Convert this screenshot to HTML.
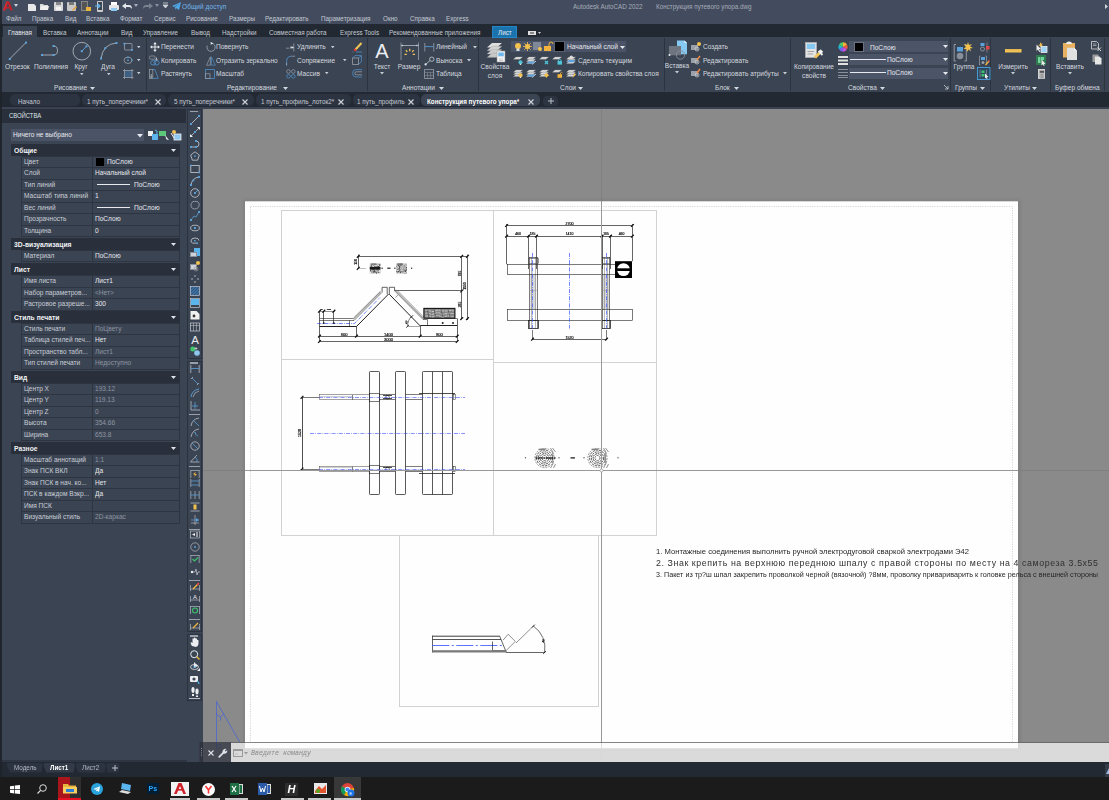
<!DOCTYPE html>
<html><head><meta charset="utf-8">
<style>
*{margin:0;padding:0;box-sizing:border-box}
html,body{width:1109px;height:800px;overflow:hidden;background:#3b4453;font-family:"Liberation Sans",sans-serif;color:#dfe3ea}
.a{position:absolute;white-space:nowrap}
svg.a{overflow:visible}
</style></head>
<body>

<div class="a" style="left:0px;top:0px;width:1109px;height:24px;background:#434c5e;"></div>
<div class="a" style="left:0px;top:24px;width:1109px;height:13px;background:#222933;"></div>
<div class="a" style="left:0px;top:37px;width:1109px;height:55px;background:#3b4453;"></div>
<div class="a" style="left:0px;top:92px;width:1109px;height:15px;background:#222933;"></div>
<div class="a" style="left:0px;top:107px;width:1109px;height:2px;background:#3a4252;"></div>
<svg class="a" style="left:3px;top:1px;" width="10" height="10" viewBox="0 0 10 10"><path d="M0 9.5 L3.6 0.5 H6.2 L9.8 9.5 H7.6 L4.9 2.6 L2.2 9.5Z" fill="#c41f26"/><path d="M3 6 H7 V7.6 H2.4Z" fill="#c41f26"/><path d="M3.6 0.5 H4.6 L1.2 9.5 H0Z" fill="#e03038"/></svg>
<svg class="a" style="left:14px;top:4px;" width="5" height="4" viewBox="0 0 5 4"><path d="M0 0 L4 0 L2 3Z" fill="#cfd4dc"/></svg>
<svg class="a" style="left:28px;top:2.5px;" width="9" height="9" viewBox="0 0 9 9"><path d="M0 1 H6 L8 3 V8 H0Z" fill="#e8e8e8"/></svg>
<svg class="a" style="left:40px;top:2px;" width="10" height="9" viewBox="0 0 10 9"><path d="M0 2 H3 L4 3 H8 V8 H0Z" fill="#d8d8d8"/><path d="M1 4 H9 L8 8 H0Z" fill="#f0f0f0"/></svg>
<svg class="a" style="left:54px;top:2px;" width="9" height="9" viewBox="0 0 9 9"><rect x="0" y="0" width="9" height="9" rx="1" fill="#d8d8d8"/><rect x="2" y="0" width="5" height="3" fill="#888"/><rect x="2" y="5" width="5" height="3" fill="#f4f4f4"/></svg>
<svg class="a" style="left:67px;top:2px;" width="10" height="9" viewBox="0 0 10 9"><rect x="0" y="0" width="9" height="9" rx="1" fill="#c8c8c8"/><rect x="2" y="0" width="5" height="3" fill="#777"/><path d="M5 8 L9 4 L10 5 L6 9Z" fill="#e8a23c"/></svg>
<svg class="a" style="left:81px;top:1px;" width="10" height="10" viewBox="0 0 10 10"><rect x="0" y="0" width="7" height="10" fill="#888"/><rect x="1" y="1" width="5" height="8" fill="#555"/><path d="M5 6 H10 V10 H5Z" fill="#e8b43c"/></svg>
<svg class="a" style="left:95px;top:1px;" width="9" height="11" viewBox="0 0 9 11"><rect x="2" y="0" width="6" height="11" rx="1" fill="#ccc"/><rect x="3" y="1" width="4" height="8" fill="#3b4453"/><path d="M0 5 H5 M3 3 L5 5 L3 7" stroke="#5bb4ec" stroke-width="1.2" fill="none"/></svg>
<svg class="a" style="left:109px;top:2px;" width="10" height="9" viewBox="0 0 10 9"><rect x="0" y="3" width="10" height="5" rx="1" fill="#e6e6e6"/><rect x="2" y="0" width="6" height="3" fill="#fff"/><rect x="2" y="6" width="6" height="3" fill="#8ec8ee"/></svg>
<svg class="a" style="left:122px;top:3px;" width="10" height="7" viewBox="0 0 10 7"><path d="M0 3 L4 0 V2 H7 Q10 2 10 6 Q9 4 7 4 H4 V6Z" fill="#e3e6ea"/></svg>
<svg class="a" style="left:134px;top:4px;" width="4" height="3" viewBox="0 0 4 3"><path d="M0 0 H4 L2 3Z" fill="#aab"/></svg>
<svg class="a" style="left:143px;top:3px;" width="10" height="7" viewBox="0 0 10 7"><path d="M10 3 L6 0 V2 H3 Q0 2 0 6 Q1 4 3 4 H6 V6Z" fill="#7a8190"/></svg>
<svg class="a" style="left:155px;top:4px;" width="4" height="3" viewBox="0 0 4 3"><path d="M0 0 H4 L2 3Z" fill="#8a90a0"/></svg>
<svg class="a" style="left:163px;top:3px;" width="5" height="6" viewBox="0 0 5 6"><path d="M0 0 H5 M0 2 L5 2 L2.5 5Z" stroke="#cfd4dc" stroke-width=".8" fill="#cfd4dc"/></svg>
<svg class="a" style="left:172px;top:2px;" width="9" height="8" viewBox="0 0 9 8"><path d="M0 4 L9 0 L7 8 L4 6 L3 8 L3 5 L8 1 L2 5Z" fill="#4ea8e8"/></svg>
<div class="a" style="left:182px;top:0.50px;height:12px;line-height:12px;font-size:7.2px;color:#6fb5ec;transform-origin:0 50%;transform:scaleX(0.92);">Общий доступ</div>
<div class="a" style="left:573.3px;top:0.50px;height:12px;line-height:12px;font-size:7.2px;color:#a4abb8;transform-origin:0 50%;transform:scaleX(0.875);">Autodesk AutoCAD 2022</div>
<div class="a" style="left:655.7px;top:0.50px;height:12px;line-height:12px;font-size:7.2px;color:#a4abb8;transform-origin:0 50%;transform:scaleX(0.875);">Конструкция путевого упора.dwg</div>
<svg class="a" style="left:1105px;top:4px;" width="3" height="5" viewBox="0 0 3 5"><path d="M0 0 L3 2.5 L0 5Z" fill="#cfd4dc"/></svg>
<div class="a" style="left:6px;top:13.00px;height:12px;line-height:12px;font-size:7.2px;color:#c4c9d2;transform-origin:0 50%;transform:scaleX(0.875);">Файл</div>
<div class="a" style="left:32px;top:13.00px;height:12px;line-height:12px;font-size:7.2px;color:#c4c9d2;transform-origin:0 50%;transform:scaleX(0.875);">Правка</div>
<div class="a" style="left:65px;top:13.00px;height:12px;line-height:12px;font-size:7.2px;color:#c4c9d2;transform-origin:0 50%;transform:scaleX(0.875);">Вид</div>
<div class="a" style="left:86px;top:13.00px;height:12px;line-height:12px;font-size:7.2px;color:#c4c9d2;transform-origin:0 50%;transform:scaleX(0.875);">Вставка</div>
<div class="a" style="left:120px;top:13.00px;height:12px;line-height:12px;font-size:7.2px;color:#c4c9d2;transform-origin:0 50%;transform:scaleX(0.875);">Формат</div>
<div class="a" style="left:154px;top:13.00px;height:12px;line-height:12px;font-size:7.2px;color:#c4c9d2;transform-origin:0 50%;transform:scaleX(0.875);">Сервис</div>
<div class="a" style="left:186px;top:13.00px;height:12px;line-height:12px;font-size:7.2px;color:#c4c9d2;transform-origin:0 50%;transform:scaleX(0.875);">Рисование</div>
<div class="a" style="left:229px;top:13.00px;height:12px;line-height:12px;font-size:7.2px;color:#c4c9d2;transform-origin:0 50%;transform:scaleX(0.875);">Размеры</div>
<div class="a" style="left:265px;top:13.00px;height:12px;line-height:12px;font-size:7.2px;color:#c4c9d2;transform-origin:0 50%;transform:scaleX(0.875);">Редактировать</div>
<div class="a" style="left:321px;top:13.00px;height:12px;line-height:12px;font-size:7.2px;color:#c4c9d2;transform-origin:0 50%;transform:scaleX(0.875);">Параметризация</div>
<div class="a" style="left:383px;top:13.00px;height:12px;line-height:12px;font-size:7.2px;color:#c4c9d2;transform-origin:0 50%;transform:scaleX(0.875);">Окно</div>
<div class="a" style="left:410px;top:13.00px;height:12px;line-height:12px;font-size:7.2px;color:#c4c9d2;transform-origin:0 50%;transform:scaleX(0.875);">Справка</div>
<div class="a" style="left:446px;top:13.00px;height:12px;line-height:12px;font-size:7.2px;color:#c4c9d2;transform-origin:0 50%;transform:scaleX(0.875);">Express</div>
<div class="a" style="left:3px;top:25.5px;width:34px;height:11.5px;background:#3b4453;"></div>
<div class="a" style="left:8px;top:26.50px;height:12px;line-height:12px;font-size:7.2px;color:#e6e9ee;transform-origin:0 50%;transform:scaleX(0.875);">Главная</div>
<div class="a" style="left:43px;top:26.50px;height:12px;line-height:12px;font-size:7.2px;color:#c4c9d2;transform-origin:0 50%;transform:scaleX(0.875);">Вставка</div>
<div class="a" style="left:77px;top:26.50px;height:12px;line-height:12px;font-size:7.2px;color:#c4c9d2;transform-origin:0 50%;transform:scaleX(0.875);">Аннотации</div>
<div class="a" style="left:121px;top:26.50px;height:12px;line-height:12px;font-size:7.2px;color:#c4c9d2;transform-origin:0 50%;transform:scaleX(0.875);">Вид</div>
<div class="a" style="left:143px;top:26.50px;height:12px;line-height:12px;font-size:7.2px;color:#c4c9d2;transform-origin:0 50%;transform:scaleX(0.875);">Управление</div>
<div class="a" style="left:191px;top:26.50px;height:12px;line-height:12px;font-size:7.2px;color:#c4c9d2;transform-origin:0 50%;transform:scaleX(0.875);">Вывод</div>
<div class="a" style="left:222px;top:26.50px;height:12px;line-height:12px;font-size:7.2px;color:#c4c9d2;transform-origin:0 50%;transform:scaleX(0.875);">Надстройки</div>
<div class="a" style="left:269px;top:26.50px;height:12px;line-height:12px;font-size:7.2px;color:#c4c9d2;transform-origin:0 50%;transform:scaleX(0.875);">Совместная работа</div>
<div class="a" style="left:340px;top:26.50px;height:12px;line-height:12px;font-size:7.2px;color:#c4c9d2;transform-origin:0 50%;transform:scaleX(0.875);">Express Tools</div>
<div class="a" style="left:389px;top:26.50px;height:12px;line-height:12px;font-size:7.2px;color:#c4c9d2;transform-origin:0 50%;transform:scaleX(0.875);">Рекомендованные приложения</div>
<div class="a" style="left:492px;top:26px;width:24.5px;height:11.5px;background:#1a73ad;border:1px solid #2687c4"></div>
<div class="a" style="left:497.5px;top:27.00px;height:12px;line-height:12px;font-size:7.2px;color:#e6e9ee;transform-origin:0 50%;transform:scaleX(0.875);">Лист</div>
<svg class="a" style="left:527.5px;top:30.5px;" width="14" height="5" viewBox="0 0 14 5"><rect x="0" y="0" width="8" height="4" fill="#e0e0e0"/><rect x="2" y="1.5" width="4" height="1" fill="#333"/><path d="M10 1 H13 L11.5 3Z" fill="#ccc"/></svg>
<div class="a" style="left:145.5px;top:38px;width:1px;height:53px;background:#2c333f;"></div>
<div class="a" style="left:367px;top:38px;width:1px;height:53px;background:#2c333f;"></div>
<div class="a" style="left:477.5px;top:38px;width:1px;height:53px;background:#2c333f;"></div>
<div class="a" style="left:664px;top:38px;width:1px;height:53px;background:#2c333f;"></div>
<div class="a" style="left:789.5px;top:38px;width:1px;height:53px;background:#2c333f;"></div>
<div class="a" style="left:950px;top:38px;width:1px;height:53px;background:#2c333f;"></div>
<div class="a" style="left:990px;top:38px;width:1px;height:53px;background:#2c333f;"></div>
<div class="a" style="left:1049.5px;top:38px;width:1px;height:53px;background:#2c333f;"></div>
<div class="a" style="left:1104px;top:38px;width:1px;height:53px;background:#2c333f;"></div>
<svg class="a" style="left:8px;top:41px;" width="20" height="20" viewBox="0 0 20 20"><line x1="1.7" y1="17.9" x2="18" y2="1.5" stroke="#b4b9c1" stroke-width=".85"/><rect x=".8" y="17" width="2" height="2" fill="#5ba3dc"/><rect x="17" y=".6" width="2" height="2" fill="#5ba3dc"/></svg>
<div class="a" style="left:5px;top:61.00px;height:12px;line-height:12px;font-size:7.5px;color:#d4d8df;transform-origin:0 50%;transform:scaleX(0.875);">Отрезок</div>
<svg class="a" style="left:40px;top:44px;" width="20" height="14" viewBox="0 0 20 14"><path d="M2 11 H13.5 Q17.5 11 17.5 6.5 Q17.5 2 13.5 2" stroke="#b4b9c1" stroke-width=".85" fill="none"/><rect x="1" y="10" width="2" height="2" fill="#5ba3dc"/><rect x="12.5" y="10" width="2" height="2" fill="#5ba3dc"/><rect x="12.5" y="1" width="2" height="2" fill="#5ba3dc"/></svg>
<div class="a" style="left:34px;top:61.00px;height:12px;line-height:12px;font-size:7.5px;color:#d4d8df;transform-origin:0 50%;transform:scaleX(0.875);">Полилиния</div>
<svg class="a" style="left:72px;top:41px;" width="20" height="20" viewBox="0 0 20 20"><circle cx="9.8" cy="10.2" r="8.8" stroke="#b4b9c1" stroke-width=".85" fill="none"/><line x1="9.8" y1="10.2" x2="14.5" y2="5.3" stroke="#5ba3dc" stroke-width=".9"/><rect x="8.8" y="9.2" width="2" height="2" fill="#5ba3dc"/><rect x="13.5" y="4.3" width="2" height="2" fill="#5ba3dc"/></svg>
<div class="a" style="left:81px;top:61.00px;height:12px;line-height:12px;font-size:7.5px;color:#d4d8df;transform-origin:50% 50%;transform:translateX(-50%) scaleX(0.875);">Круг</div>
<svg class="a" style="left:79.5px;top:72.5px;" width="3.5" height="2.5" viewBox="0 0 3.5 2.5"><path d="M0 0 H3.5 L1.75 2.2Z" fill="#c9cdd4"/></svg>
<svg class="a" style="left:99px;top:41px;" width="20" height="20" viewBox="0 0 20 20"><path d="M2 17.5 Q4 3 17.5 2" stroke="#b4b9c1" stroke-width=".85" fill="none"/><rect x="1" y="16.5" width="2" height="2" fill="#5ba3dc"/><rect x="5.3" y="6.2" width="2" height="2" fill="#5ba3dc"/><rect x="16.5" y="1" width="2" height="2" fill="#5ba3dc"/></svg>
<div class="a" style="left:108px;top:61.00px;height:12px;line-height:12px;font-size:7.5px;color:#d4d8df;transform-origin:50% 50%;transform:translateX(-50%) scaleX(0.875);">Дуга</div>
<svg class="a" style="left:106.5px;top:72.5px;" width="3.5" height="2.5" viewBox="0 0 3.5 2.5"><path d="M0 0 H3.5 L1.75 2.2Z" fill="#c9cdd4"/></svg>
<svg class="a" style="left:123px;top:42px;" width="11" height="10" viewBox="0 0 11 10"><rect x="1.5" y="1.5" width="7.5" height="6.5" rx=".5" stroke="#9aa0aa" stroke-width=".8" fill="none"/><rect x=".5" y=".8" width="1.8" height="1.8" fill="#5ba3dc"/><rect x="8" y="7" width="1.8" height="1.8" fill="#5ba3dc"/></svg>
<svg class="a" style="left:123px;top:56px;" width="11" height="9" viewBox="0 0 11 9"><ellipse cx="5" cy="4.3" rx="4" ry="3.2" stroke="#9aa0aa" stroke-width=".8" fill="none"/><rect x="4.2" y="3.6" width="1.6" height="1.4" fill="#5ba3dc"/><rect x="4.2" y=".6" width="1.6" height="1.2" fill="#5ba3dc"/><rect x="8.2" y="3.6" width="1.4" height="1.4" fill="#5ba3dc"/></svg>
<svg class="a" style="left:123px;top:69px;" width="11" height="10" viewBox="0 0 11 10"><rect x="1.5" y="1.5" width="7.5" height="7" fill="#3e5f84"/><path d="M0 1.5 H10.5 M0 8.5 H10.5 M1.5 0 V10 M9 0 V10" stroke="#9aa0aa" stroke-width=".8"/></svg>
<svg class="a" style="left:136.5px;top:45.5px;" width="3.5" height="2.5" viewBox="0 0 3.5 2.5"><path d="M0 0 H3.5 L1.75 2.2Z" fill="#c9cdd4"/></svg>
<svg class="a" style="left:136.5px;top:58.5px;" width="3.5" height="2.5" viewBox="0 0 3.5 2.5"><path d="M0 0 H3.5 L1.75 2.2Z" fill="#c9cdd4"/></svg>
<svg class="a" style="left:136.5px;top:72px;" width="3.5" height="2.5" viewBox="0 0 3.5 2.5"><path d="M0 0 H3.5 L1.75 2.2Z" fill="#c9cdd4"/></svg>
<div class="a" style="left:54px;top:81.60px;height:12px;line-height:12px;font-size:7.5px;color:#d4d8df;transform-origin:0 50%;transform:scaleX(0.875);">Рисование</div>
<svg class="a" style="left:90px;top:86.6px;" width="5" height="3" viewBox="0 0 5 3"><path d="M0 0 H5 L2.5 3Z" fill="#d4d8df"/></svg>
<svg class="a" style="left:149.5px;top:42px;" width="10" height="10" viewBox="0 0 10 10"><path d="M5 1 V9 M1 5 H9" stroke="#e6e9ee" stroke-width="1"/><path d="M5 0 L3.2 2.2 H6.8Z M5 10 L3.2 7.8 H6.8Z M0 5 L2.2 3.2 V6.8Z M10 5 L7.8 3.2 V6.8Z" fill="#e6e9ee"/></svg>
<div class="a" style="left:161px;top:41.00px;height:12px;line-height:12px;font-size:7.5px;color:#d4d8df;transform-origin:0 50%;transform:scaleX(0.875);">Перенести</div>
<svg class="a" style="left:149px;top:55px;" width="11" height="11" viewBox="0 0 11 11"><rect x=".6" y="1" width="5.5" height="3.2" rx="1" stroke="#9aa0aa" stroke-width=".7" fill="none"/><path d="M7.5 2.6 V5.5 M6.5 4.5 L7.5 5.8 L8.5 4.5" stroke="#e6e9ee" stroke-width=".7" fill="none"/><ellipse cx="4.2" cy="7.8" rx="2.6" ry="2.2" stroke="#4f8fc8" stroke-width=".9" fill="none"/><ellipse cx="7.6" cy="7.8" rx="2.6" ry="2.2" stroke="#4f8fc8" stroke-width=".9" fill="none"/></svg>
<div class="a" style="left:161px;top:54.50px;height:12px;line-height:12px;font-size:7.5px;color:#d4d8df;transform-origin:0 50%;transform:scaleX(0.875);">Копировать</div>
<svg class="a" style="left:149px;top:68.5px;" width="10" height="10" viewBox="0 0 10 10"><rect x=".6" y=".6" width="3.2" height="8.8" stroke="#9aa0aa" stroke-width=".7" fill="none"/><path d="M3.8 .6 H6 L9.2 9.4 H3.8" stroke="#4f8fc8" stroke-width=".8" fill="none"/><path d="M2.2 5 V8.5 M1.3 7.6 L2.2 8.6 L3.1 7.6" stroke="#e6e9ee" stroke-width=".6" fill="none"/></svg>
<div class="a" style="left:161px;top:68.00px;height:12px;line-height:12px;font-size:7.5px;color:#d4d8df;transform-origin:0 50%;transform:scaleX(0.875);">Растянуть</div>
<svg class="a" style="left:205.5px;top:42px;" width="10" height="10" viewBox="0 0 10 10"><path d="M5.6 1.2 A4.1 4.1 0 1 1 1.3 3.6" stroke="#a6abb3" stroke-width=".8" fill="none"/><path d="M4.6 0 L7.4 1.3 L4.8 2.8Z" fill="#e6e9ee"/></svg>
<div class="a" style="left:216px;top:41.00px;height:12px;line-height:12px;font-size:7.5px;color:#d4d8df;transform-origin:0 50%;transform:scaleX(0.875);">Повернуть</div>
<svg class="a" style="left:205.5px;top:55.5px;" width="10" height="10" viewBox="0 0 10 10"><path d="M4.4 .8 L.6 9.2 H4.4Z" stroke="#9aa0aa" stroke-width=".7" fill="none"/><path d="M5.4 .8 L9.4 9.2 H5.4Z" stroke="#4f8fc8" stroke-width=".7" fill="none"/></svg>
<div class="a" style="left:216px;top:54.50px;height:12px;line-height:12px;font-size:7.5px;color:#d4d8df;transform-origin:0 50%;transform:scaleX(0.875);">Отразить зеркально</div>
<svg class="a" style="left:205px;top:68.5px;" width="10" height="10" viewBox="0 0 10 10"><rect x=".6" y=".6" width="8.8" height="8.8" stroke="#4f8fc8" stroke-width=".8" fill="none"/><rect x=".6" y="4.8" width="4.4" height="4.6" stroke="#9aa0aa" stroke-width=".7" fill="none"/></svg>
<div class="a" style="left:216px;top:68.00px;height:12px;line-height:12px;font-size:7.5px;color:#d4d8df;transform-origin:0 50%;transform:scaleX(0.875);">Масштаб</div>
<svg class="a" style="left:286px;top:42.5px;" width="10" height="9" viewBox="0 0 10 9"><path d="M0 5.2 H3 M3.8 5.2 H6.2" stroke="#8a909a" stroke-width=".9"/><path d="M7.8 .5 V8.5" stroke="#9aa0aa" stroke-width=".8"/><path d="M4.2 4 H6.6 L7.4 4.6 L6.6 5.2" stroke="#e6e9ee" stroke-width=".7" fill="#e6e9ee"/></svg>
<div class="a" style="left:297px;top:41.00px;height:12px;line-height:12px;font-size:7.5px;color:#d4d8df;transform-origin:0 50%;transform:scaleX(0.875);">Удлинить</div>
<svg class="a" style="left:330.5px;top:45.5px;" width="3.5" height="2.5" viewBox="0 0 3.5 2.5"><path d="M0 0 H3.5 L1.75 2.2Z" fill="#c9cdd4"/></svg>
<svg class="a" style="left:286px;top:54.5px;" width="10" height="11" viewBox="0 0 10 11"><path d="M.6 10.5 V6.5 Q.6 1.2 5.6 1.2" stroke="#4f8fc8" stroke-width=".9" fill="none"/><path d="M5.6 1.2 H9" stroke="#9aa0aa" stroke-width=".8"/><path d="M.6 8 V10.5" stroke="#9aa0aa" stroke-width=".8"/></svg>
<div class="a" style="left:297px;top:54.50px;height:12px;line-height:12px;font-size:7.5px;color:#d4d8df;transform-origin:0 50%;transform:scaleX(0.875);">Сопряжение</div>
<svg class="a" style="left:342.5px;top:58.5px;" width="3.5" height="2.5" viewBox="0 0 3.5 2.5"><path d="M0 0 H3.5 L1.75 2.2Z" fill="#c9cdd4"/></svg>
<svg class="a" style="left:286px;top:68.5px;" width="10" height="10" viewBox="0 0 10 10"><circle cx="2.5" cy="2.5" r="1.8" stroke="#9aa0aa" stroke-width=".7" fill="none"/><circle cx="7.3" cy="2.5" r="1.8" stroke="#9aa0aa" stroke-width=".7" fill="none"/><circle cx="2.5" cy="7.3" r="1.8" stroke="#4f8fc8" stroke-width=".8" fill="none"/><circle cx="7.3" cy="7.3" r="1.8" stroke="#4f8fc8" stroke-width=".8" fill="none"/></svg>
<div class="a" style="left:297px;top:68.00px;height:12px;line-height:12px;font-size:7.5px;color:#d4d8df;transform-origin:0 50%;transform:scaleX(0.875);">Массив</div>
<svg class="a" style="left:324.5px;top:72px;" width="3.5" height="2.5" viewBox="0 0 3.5 2.5"><path d="M0 0 H3.5 L1.75 2.2Z" fill="#c9cdd4"/></svg>
<svg class="a" style="left:352px;top:41.5px;" width="10" height="11" viewBox="0 0 10 11"><path d="M3.5 7.5 L9.5 1" stroke="#f2c458" stroke-width="2"/><circle cx="3" cy="8" r="1.3" fill="#e03a3a"/><path d="M.5 10 H1.5 M4 10 H10" stroke="#4f8fc8" stroke-width=".8"/></svg>
<svg class="a" style="left:352px;top:55px;" width="10" height="10" viewBox="0 0 10 10"><rect x=".6" y="3" width="6" height="6.4" stroke="#9aa0aa" stroke-width=".8" fill="none"/><path d="M.6 3 L3 .6 H9.4 V6.8 L6.6 9.4 M6.6 3 L9.4 .6" stroke="#4f8fc8" stroke-width=".8" fill="none"/></svg>
<svg class="a" style="left:352px;top:68.5px;" width="10" height="9" viewBox="0 0 10 9"><path d="M10 .6 H4 Q.6 .6 .6 4.3 Q.6 8 4 8 H10" stroke="#4f8fc8" stroke-width=".8" fill="none"/><path d="M10 2.8 H4.2 Q2.8 2.8 2.8 4.3 Q2.8 5.8 4.2 5.8 H10" stroke="#9aa0aa" stroke-width=".8" fill="none"/></svg>
<div class="a" style="left:227px;top:81.60px;height:12px;line-height:12px;font-size:7.5px;color:#d4d8df;transform-origin:0 50%;transform:scaleX(0.875);">Редактирование</div>
<svg class="a" style="left:283px;top:86.6px;" width="5" height="3" viewBox="0 0 5 3"><path d="M0 0 H5 L2.5 3Z" fill="#d4d8df"/></svg>
<div class="a" style="left:382.3px;top:45.00px;height:12px;line-height:12px;font-size:21px;color:#eceef2;transform-origin:50% 50%;transform:translateX(-50%) scaleX(0.95);">A</div>
<div class="a" style="left:382px;top:61.00px;height:12px;line-height:12px;font-size:7.5px;color:#d4d8df;transform-origin:50% 50%;transform:translateX(-50%) scaleX(0.875);">Текст</div>
<svg class="a" style="left:380px;top:72px;" width="4" height="3" viewBox="0 0 4 3"><path d="M0 0 H4 L2 2.5Z" fill="#c9cdd4"/></svg>
<svg class="a" style="left:400px;top:42px;" width="20" height="19" viewBox="0 0 20 19"><path d="M1 .5 V18 M18.5 .5 V18" stroke="#9aa0aa" stroke-width=".8"/><path d="M1 3.5 H18.5" stroke="#c9cdd4" stroke-width=".7"/><path d="M1 3.5 L3 2.5 V4.5Z M18.5 3.5 L16.5 2.5 V4.5Z" fill="#c9cdd4"/><path d="M9.75 6.8 V9.2 M6 8.2 L7.2 10 M13.5 8.2 L12.3 10 M4.5 12.3 H6.8 M12.7 12.3 H15" stroke="#f2c458" stroke-width="1.3"/></svg>
<div class="a" style="left:409px;top:61.00px;height:12px;line-height:12px;font-size:7.5px;color:#d4d8df;transform-origin:50% 50%;transform:translateX(-50%) scaleX(0.875);">Размер</div>
<svg class="a" style="left:424px;top:43px;" width="11" height="9" viewBox="0 0 11 9"><path d="M.8 0 V8.5 M9.8 0 V8.5" stroke="#9aa0aa" stroke-width=".8"/><path d="M.8 3.6 H9.8" stroke="#5ba3dc" stroke-width=".8"/></svg>
<div class="a" style="left:436px;top:41.00px;height:12px;line-height:12px;font-size:7.5px;color:#d4d8df;transform-origin:0 50%;transform:scaleX(0.875);">Линейный</div>
<svg class="a" style="left:473px;top:46px;" width="4" height="3" viewBox="0 0 4 3"><path d="M0 0 H4 L2 2.5Z" fill="#c9cdd4"/></svg>
<svg class="a" style="left:424px;top:55.5px;" width="11" height="10" viewBox="0 0 11 10"><path d="M1.5 8.5 L6 4.5" stroke="#c9cdd4" stroke-width=".8"/><circle cx="1.6" cy="8.4" r="1.1" fill="#e6e9ee"/><circle cx="7.8" cy="3.2" r="2.2" stroke="#c9cdd4" stroke-width=".8" fill="none"/></svg>
<div class="a" style="left:436px;top:54.50px;height:12px;line-height:12px;font-size:7.5px;color:#d4d8df;transform-origin:0 50%;transform:scaleX(0.875);">Выноска</div>
<svg class="a" style="left:467px;top:59px;" width="4" height="3" viewBox="0 0 4 3"><path d="M0 0 H4 L2 2.5Z" fill="#c9cdd4"/></svg>
<svg class="a" style="left:424px;top:68.5px;" width="11" height="10" viewBox="0 0 11 10"><rect x=".6" y=".6" width="9" height="8.8" stroke="#9aa0aa" stroke-width=".8" fill="none"/><path d="M.6 3.4 H9.6 M3.6 3.4 V9.4 M6.6 3.4 V9.4 M.6 6.4 H9.6" stroke="#8a909a" stroke-width=".6"/></svg>
<div class="a" style="left:436px;top:68.00px;height:12px;line-height:12px;font-size:7.5px;color:#d4d8df;transform-origin:0 50%;transform:scaleX(0.875);">Таблица</div>
<div class="a" style="left:402px;top:81.60px;height:12px;line-height:12px;font-size:7.5px;color:#d4d8df;transform-origin:0 50%;transform:scaleX(0.875);">Аннотации</div>
<svg class="a" style="left:439px;top:86.6px;" width="5" height="3" viewBox="0 0 5 3"><path d="M0 0 H5 L2.5 3Z" fill="#d4d8df"/></svg>
<svg class="a" style="left:486px;top:41px;" width="21" height="22" viewBox="0 0 21 22"><path d="M1 6.5 L6 2 H16 L11 6.5Z" fill="#dedede"/><path d="M1 9.8 L6 5.3 H16 L11 9.8Z" fill="#d2d2d2" stroke="#888" stroke-width=".3"/><path d="M1 13.1 L6 8.6 H16 L11 13.1Z" fill="#cfcfcf" stroke="#888" stroke-width=".3"/><path d="M1 16.4 L6 11.9 H16 L11 16.4Z" fill="#c8c8c8" stroke="#888" stroke-width=".3"/><rect x="11" y="10" width="8" height="11" fill="#f2f2f2" stroke="#9a9a9a" stroke-width=".5"/><rect x="12.2" y="11.5" width="5.6" height="3.8" fill="#6fb8ee"/><path d="M13 18 H17 M13 19.5 H17" stroke="#aaa" stroke-width=".5"/></svg>
<div class="a" style="left:495px;top:61.00px;height:12px;line-height:12px;font-size:7.5px;color:#d4d8df;transform-origin:50% 50%;transform:translateX(-50%) scaleX(0.875);">Свойства</div>
<div class="a" style="left:495px;top:70.00px;height:12px;line-height:12px;font-size:7.5px;color:#d4d8df;transform-origin:50% 50%;transform:translateX(-50%) scaleX(0.875);">слоя</div>
<div class="a" style="left:511px;top:41px;width:115px;height:11px;background:#4a5367;"></div>
<svg class="a" style="left:514px;top:43px;" width="8" height="8" viewBox="0 0 8 8"><circle cx="4" cy="3" r="3" fill="#f2c14e"/><rect x="2.5" y="5.5" width="3" height="2.5" fill="#ddd"/></svg>
<svg class="a" style="left:523px;top:42px;" width="9" height="9" viewBox="0 0 9 9"><circle cx="4.5" cy="4.5" r="2.5" fill="#f2c14e"/><path d="M4.5 0 V9 M0 4.5 H9 M1.3 1.3 L7.7 7.7 M7.7 1.3 L1.3 7.7" stroke="#f2c14e" stroke-width=".8"/></svg>
<svg class="a" style="left:533px;top:42px;" width="10" height="9" viewBox="0 0 10 9"><rect x="0" y="0" width="8" height="8" fill="#7f8896"/><circle cx="7" cy="7" r="2" fill="#f2c14e"/></svg>
<svg class="a" style="left:544px;top:42px;" width="9" height="9" viewBox="0 0 9 9"><rect x="0" y="4" width="7" height="5" fill="#f2b43c"/><path d="M5 4 V2 Q5 0 7 0 Q9 0 9 2" stroke="#f2b43c" fill="none"/></svg>
<div class="a" style="left:555px;top:42px;width:9px;height:9px;background:#000;"></div>
<div class="a" style="left:555px;top:42px;width:9px;height:9px;background:#000;outline:1px solid #5a6273"></div>
<div class="a" style="left:567px;top:41.00px;height:12px;line-height:12px;font-size:7.5px;color:#e6e9ee;transform-origin:0 50%;transform:scaleX(0.875);">Начальный слой</div>
<svg class="a" style="left:620px;top:46px;" width="5" height="3" viewBox="0 0 5 3"><path d="M0 0 H5 L2.5 3Z" fill="#e6e9ee"/></svg>
<svg class="a" style="left:513px;top:55px;" width="11" height="10" viewBox="0 0 11 10"><path d="M0.5 4.2 L3 2.0 H9.5 L7 4.2Z" fill="#dcdcdc" stroke="#9a9a9a" stroke-width=".3"/><circle cx="7.5" cy="7.3" r="2" fill="#4fc6d8"/><rect x="6.8" y="8.6" width="1.4" height="1.4" fill="#ddd"/></svg>
<svg class="a" style="left:526px;top:55px;" width="11" height="10" viewBox="0 0 11 10"><path d="M0.5 4.2 L3 2.0 H9.5 L7 4.2Z" fill="#dcdcdc" stroke="#9a9a9a" stroke-width=".3"/><path d="M0.5 6.4 L3 4.2 H9.5 L7 6.4Z" fill="#dcdcdc" stroke="#9a9a9a" stroke-width=".3"/><path d="M0.5 8.600000000000001 L3 6.4 H9.5 L7 8.600000000000001Z" fill="#dcdcdc" stroke="#9a9a9a" stroke-width=".3"/><path d="M6 9.5 L10 6" stroke="#dde" stroke-width=".8"/><path d="M0.5 8.6 L3 6.4 H9.5 L7 8.6Z" fill="#5ba3dc"/></svg>
<svg class="a" style="left:539px;top:55px;" width="11" height="10" viewBox="0 0 11 10"><path d="M0.5 4.2 L3 2.0 H9.5 L7 4.2Z" fill="#dcdcdc" stroke="#9a9a9a" stroke-width=".3"/><path d="M6 6 L9 9 M9 6 L6 9" stroke="#4fc6d8" stroke-width="1.3"/></svg>
<svg class="a" style="left:552px;top:55px;" width="11" height="10" viewBox="0 0 11 10"><path d="M0.5 4.2 L3 2.0 H9.5 L7 4.2Z" fill="#dcdcdc" stroke="#9a9a9a" stroke-width=".3"/><rect x="5.5" y="6" width="4.5" height="3.6" fill="#4fc6d8"/><path d="M6.5 6 V5 Q7.75 3.5 9 5 V6" stroke="#4fc6d8" stroke-width=".8" fill="none"/></svg>
<svg class="a" style="left:566px;top:54.5px;" width="11" height="10" viewBox="0 0 11 10"><path d="M0.5 4.2 L3 2.0 H9.5 L7 4.2Z" fill="#dcdcdc" stroke="#9a9a9a" stroke-width=".3"/><path d="M0.5 6.4 L3 4.2 H9.5 L7 6.4Z" fill="#dcdcdc" stroke="#9a9a9a" stroke-width=".3"/><path d="M0.5 8.600000000000001 L3 6.4 H9.5 L7 8.600000000000001Z" fill="#dcdcdc" stroke="#9a9a9a" stroke-width=".3"/><path d="M0.5 7.2 L3 5 H9.5 L7 7.2Z" fill="#5ba3dc"/><circle cx="5.3" cy="2" r="1.6" fill="#ddd"/></svg>
<div class="a" style="left:578px;top:54.50px;height:12px;line-height:12px;font-size:7.5px;color:#d4d8df;transform-origin:0 50%;transform:scaleX(0.875);">Сделать текущим</div>
<svg class="a" style="left:513px;top:68px;" width="11" height="10" viewBox="0 0 11 10"><path d="M0.5 4.2 L3 2.0 H9.5 L7 4.2Z" fill="#dcdcdc" stroke="#9a9a9a" stroke-width=".3"/><path d="M0.5 6.4 L3 4.2 H9.5 L7 6.4Z" fill="#dcdcdc" stroke="#9a9a9a" stroke-width=".3"/><path d="M0.5 8.600000000000001 L3 6.4 H9.5 L7 8.600000000000001Z" fill="#dcdcdc" stroke="#9a9a9a" stroke-width=".3"/><circle cx="7.5" cy="7.3" r="2" fill="#f2c14e"/><rect x="6.8" y="8.6" width="1.4" height="1.4" fill="#ddd"/></svg>
<svg class="a" style="left:526px;top:68px;" width="11" height="10" viewBox="0 0 11 10"><path d="M0.5 4.2 L3 2.0 H9.5 L7 4.2Z" fill="#dcdcdc" stroke="#9a9a9a" stroke-width=".3"/><path d="M0.5 6.4 L3 4.2 H9.5 L7 6.4Z" fill="#dcdcdc" stroke="#9a9a9a" stroke-width=".3"/><path d="M0.5 8.600000000000001 L3 6.4 H9.5 L7 8.600000000000001Z" fill="#dcdcdc" stroke="#9a9a9a" stroke-width=".3"/><path d="M6 9.5 L10 6" stroke="#dde" stroke-width=".8"/><path d="M0.5 8.6 L3 6.4 H9.5 L7 8.6Z" fill="#5ba3dc"/></svg>
<svg class="a" style="left:539px;top:68px;" width="11" height="10" viewBox="0 0 11 10"><path d="M0.5 4.2 L3 2.0 H9.5 L7 4.2Z" fill="#dcdcdc" stroke="#9a9a9a" stroke-width=".3"/><path d="M0.5 6.4 L3 4.2 H9.5 L7 6.4Z" fill="#dcdcdc" stroke="#9a9a9a" stroke-width=".3"/><path d="M0.5 8.600000000000001 L3 6.4 H9.5 L7 8.600000000000001Z" fill="#dcdcdc" stroke="#9a9a9a" stroke-width=".3"/><circle cx="7.5" cy="7.3" r="1.8" fill="#f2c14e"/><path d="M7.5 4.5 V10 M4.8 7.3 H10.2" stroke="#f2c14e" stroke-width=".6"/></svg>
<svg class="a" style="left:552px;top:68px;" width="11" height="10" viewBox="0 0 11 10"><path d="M0.5 4.2 L3 2.0 H9.5 L7 4.2Z" fill="#dcdcdc" stroke="#9a9a9a" stroke-width=".3"/><rect x="5.5" y="6.2" width="4.5" height="3.6" fill="#f2b43c"/><path d="M8.5 6.2 V5 Q9.5 3.6 10.5 5" stroke="#f2b43c" stroke-width=".8" fill="none"/></svg>
<svg class="a" style="left:566px;top:68px;" width="11" height="10" viewBox="0 0 11 10"><path d="M0.5 4.2 L3 2.0 H9.5 L7 4.2Z" fill="#dcdcdc" stroke="#9a9a9a" stroke-width=".3"/><path d="M0.5 6.4 L3 4.2 H9.5 L7 6.4Z" fill="#dcdcdc" stroke="#9a9a9a" stroke-width=".3"/><path d="M0.5 8.600000000000001 L3 6.4 H9.5 L7 8.600000000000001Z" fill="#dcdcdc" stroke="#9a9a9a" stroke-width=".3"/><path d="M6.5 10 L10 6.5 L8.5 5Z" fill="#f2c14e"/></svg>
<div class="a" style="left:578px;top:68.00px;height:12px;line-height:12px;font-size:7.5px;color:#d4d8df;transform-origin:0 50%;transform:scaleX(0.875);">Копировать свойства слоя</div>
<div class="a" style="left:560px;top:81.60px;height:12px;line-height:12px;font-size:7.5px;color:#d4d8df;transform-origin:0 50%;transform:scaleX(0.875);">Слои</div>
<svg class="a" style="left:578px;top:86.6px;" width="5" height="3" viewBox="0 0 5 3"><path d="M0 0 H5 L2.5 3Z" fill="#d4d8df"/></svg>
<svg class="a" style="left:667px;top:39px;" width="22" height="22" viewBox="0 0 22 22"><path d="M10 1.4 H17.5 L20 4 V15.2 H10Z" fill="#85c8f2"/><path d="M17.5 1.4 V4 H20" fill="#e8f4fc"/><rect x="2" y="7" width="12" height="9.3" fill="#6f7580"/><circle cx="13.5" cy="16" r="4.2" fill="none" stroke="#8a9098" stroke-width=".9"/><circle cx="2.5" cy="16" r="1" fill="#eee"/></svg>
<div class="a" style="left:677px;top:60.00px;height:12px;line-height:12px;font-size:7.5px;color:#d4d8df;transform-origin:50% 50%;transform:translateX(-50%) scaleX(0.875);">Вставка</div>
<svg class="a" style="left:675px;top:71px;" width="4" height="3" viewBox="0 0 4 3"><path d="M0 0 H4 L2 2.5Z" fill="#c9cdd4"/></svg>
<svg class="a" style="left:691px;top:42px;" width="10" height="10" viewBox="0 0 10 10"><rect x="0" y="3" width="7" height="5" fill="#9aa0aa"/><circle cx="6" cy="7" r="2" fill="none" stroke="#ccc" stroke-width=".8"/><circle cx="8" cy="2" r="2" fill="#f2c14e"/></svg>
<svg class="a" style="left:691px;top:55px;" width="10" height="10" viewBox="0 0 10 10"><rect x="0" y="3" width="7" height="5" fill="#9aa0aa"/><circle cx="6" cy="7" r="2" fill="none" stroke="#ccc" stroke-width=".8"/><path d="M6 5 L9 1" stroke="#e84" stroke-width="1.5"/></svg>
<svg class="a" style="left:691px;top:68px;" width="10" height="10" viewBox="0 0 10 10"><rect x="0" y="3" width="7" height="5" fill="#9aa0aa"/><circle cx="6" cy="7" r="2" fill="none" stroke="#ccc" stroke-width=".8"/><path d="M6 5 L9 1" stroke="#e84" stroke-width="1.5"/></svg>
<div class="a" style="left:703px;top:41.00px;height:12px;line-height:12px;font-size:7.5px;color:#d4d8df;transform-origin:0 50%;transform:scaleX(0.875);">Создать</div>
<div class="a" style="left:703px;top:54.50px;height:12px;line-height:12px;font-size:7.5px;color:#d4d8df;transform-origin:0 50%;transform:scaleX(0.875);">Редактировать</div>
<div class="a" style="left:703px;top:68.00px;height:12px;line-height:12px;font-size:7.5px;color:#d4d8df;transform-origin:0 50%;transform:scaleX(0.875);">Редактировать атрибуты</div>
<svg class="a" style="left:783px;top:72px;" width="4" height="3" viewBox="0 0 4 3"><path d="M0 0 H4 L2 2.5Z" fill="#c9cdd4"/></svg>
<div class="a" style="left:715px;top:81.60px;height:12px;line-height:12px;font-size:7.5px;color:#d4d8df;transform-origin:0 50%;transform:scaleX(0.875);">Блок</div>
<svg class="a" style="left:734px;top:86.6px;" width="5" height="3" viewBox="0 0 5 3"><path d="M0 0 H5 L2.5 3Z" fill="#d4d8df"/></svg>
<svg class="a" style="left:805px;top:41.5px;" width="19" height="18" viewBox="0 0 19 18"><rect x=".5" y=".5" width="11" height="15" fill="#e4e4e4" stroke="#b8b8b8" stroke-width=".6"/><rect x="1.8" y="1.8" width="8.4" height="5.2" fill="#85c8f2"/><path d="M2.5 9.5 H9 M2.5 12 H8" stroke="#888" stroke-width=".7"/><path d="M10 15.5 L14.5 11" stroke="#f2c458" stroke-width="3"/><path d="M13.5 9 L17.5 13 M15 8 L17.5 10.5" stroke="#f0f0f0" stroke-width="1.8"/></svg>
<div class="a" style="left:814px;top:61.00px;height:12px;line-height:12px;font-size:7.5px;color:#d4d8df;transform-origin:50% 50%;transform:translateX(-50%) scaleX(0.875);">Копирование</div>
<div class="a" style="left:814px;top:70.00px;height:12px;line-height:12px;font-size:7.5px;color:#d4d8df;transform-origin:50% 50%;transform:translateX(-50%) scaleX(0.875);">свойств</div>
<svg class="a" style="left:838px;top:41.5px;" width="10" height="10" viewBox="0 0 10 10"><path d="M5 5 L5 0.3 A4.7 4.7 0 0 1 9.07 2.65Z" fill="#f9b233"/><path d="M5 5 L9.07 2.65 A4.7 4.7 0 0 1 9.07 7.35Z" fill="#f25a3c"/><path d="M5 5 L9.07 7.35 A4.7 4.7 0 0 1 5 9.7Z" fill="#c94fd6"/><path d="M5 5 L5 9.7 A4.7 4.7 0 0 1 0.93 7.35Z" fill="#7a5cf0"/><path d="M5 5 L0.93 7.35 A4.7 4.7 0 0 1 0.93 2.65Z" fill="#1fb6d0"/><path d="M5 5 L0.93 2.65 A4.7 4.7 0 0 1 5 0.3Z" fill="#4cc96a"/></svg>
<svg class="a" style="left:838px;top:55px;" width="10" height="10" viewBox="0 0 10 10"><rect x="0" y="1" width="10" height="2" fill="#e0e0e0"/><rect x="0" y="4.5" width="10" height="2" fill="#e0e0e0"/><rect x="0" y="8" width="10" height="2" fill="#e0e0e0"/></svg>
<svg class="a" style="left:838px;top:68px;" width="10" height="10" viewBox="0 0 10 10"><rect x="0" y="1" width="10" height="1" fill="#8a909a"/><rect x="0" y="4" width="10" height="1" fill="#8a909a"/><rect x="0" y="7" width="10" height="1" fill="#8a909a"/><rect x="0" y="9" width="10" height="1" fill="#8a909a"/></svg>
<div class="a" style="left:849px;top:41px;width:99px;height:11px;background:#4c5568;"></div>
<svg class="a" style="left:943px;top:45px;" width="5" height="3" viewBox="0 0 5 3"><path d="M0 0 H5 L2.5 3Z" fill="#e6e9ee"/></svg>
<div class="a" style="left:849px;top:54px;width:99px;height:11px;background:#4c5568;"></div>
<svg class="a" style="left:943px;top:58px;" width="5" height="3" viewBox="0 0 5 3"><path d="M0 0 H5 L2.5 3Z" fill="#e6e9ee"/></svg>
<div class="a" style="left:849px;top:67.5px;width:99px;height:11px;background:#4c5568;"></div>
<svg class="a" style="left:943px;top:71.5px;" width="5" height="3" viewBox="0 0 5 3"><path d="M0 0 H5 L2.5 3Z" fill="#e6e9ee"/></svg>
<div class="a" style="left:855px;top:43px;width:8px;height:8px;background:#000;outline:1px solid #6a7283"></div>
<div class="a" style="left:870px;top:41.60px;height:12px;line-height:12px;font-size:7.5px;color:#e6e9ee;transform-origin:0 50%;transform:scaleX(0.875);">ПоСлою</div>
<div class="a" style="left:850px;top:59px;width:36px;height:1px;background:#e6e9ee;"></div>
<div class="a" style="left:887px;top:54.00px;height:12px;line-height:12px;font-size:7.5px;color:#e6e9ee;transform-origin:0 50%;transform:scaleX(0.875);">ПоСлою</div>
<div class="a" style="left:850px;top:72.3px;width:36px;height:1px;background:#e6e9ee;"></div>
<div class="a" style="left:887px;top:67.30px;height:12px;line-height:12px;font-size:7.5px;color:#e6e9ee;transform-origin:0 50%;transform:scaleX(0.875);">ПоСлою</div>
<div class="a" style="left:848px;top:81.60px;height:12px;line-height:12px;font-size:7.5px;color:#d4d8df;transform-origin:0 50%;transform:scaleX(0.875);">Свойства</div>
<svg class="a" style="left:880px;top:86.6px;" width="5" height="3" viewBox="0 0 5 3"><path d="M0 0 H5 L2.5 3Z" fill="#d4d8df"/></svg>
<svg class="a" style="left:944px;top:85px;" width="4" height="4" viewBox="0 0 4 4"><path d="M0 0 L4 4 M4 1 V4 H1" stroke="#c9cdd4" stroke-width=".8" fill="none"/></svg>
<svg class="a" style="left:953px;top:41px;" width="22" height="21" viewBox="0 0 22 21"><path d="M3 3.5 H1.2 V20 H3 M11.5 3.5 H13.3 V20 H11.5" stroke="#9aa0aa" stroke-width=".9" fill="none"/><rect x="4" y="6" width="6" height="4.5" fill="#5ba3dc"/><circle cx="7" cy="15" r="3.3" fill="#8a909a"/><path d="M15 1 L16 4 L19 3 L17 5.5 L20 7 L17 7.5 L18 10.5 L15.5 8.5 L14 11 L13.5 8 L10.5 8 L13 6 L11 3.5 L14 4Z" fill="#f2c14e"/></svg>
<div class="a" style="left:964px;top:61.00px;height:12px;line-height:12px;font-size:7.5px;color:#d4d8df;transform-origin:50% 50%;transform:translateX(-50%) scaleX(0.875);">Группа</div>
<svg class="a" style="left:978.5px;top:41.5px;" width="11" height="11" viewBox="0 0 11 11"><rect x="1.5" y="1" width="4" height="3" fill="#5ba3dc"/><circle cx="3.5" cy="7" r="2" fill="none" stroke="#9aa0aa" stroke-width=".8"/><path d="M8 0.5 V10.5" stroke="#9aa0aa" stroke-width=".6"/><rect x="7" y="4" width="3.5" height="3.5" fill="#e04848"/></svg>
<svg class="a" style="left:978.5px;top:54.5px;" width="11" height="11" viewBox="0 0 11 11"><path d="M1.5 1 H0.5 V10 H1.5 M6.5 1 H7.5 V10" stroke="#9aa0aa" stroke-width=".7" fill="none"/><rect x="2" y="2" width="4" height="3" fill="#5ba3dc"/><circle cx="4" cy="7.5" r="1.5" fill="#9aa0aa"/><path d="M6.5 10 L10 6" stroke="#f2b43c" stroke-width="1.4"/><path d="M9.5 6.5 L10.5 5.5" stroke="#e04848" stroke-width="1.4"/></svg>
<svg class="a" style="left:976.5px;top:66.5px;" width="14" height="13" viewBox="0 0 14 13"><rect x="0.5" y="0.5" width="12.5" height="12" fill="#2e4860" stroke="#4aa3df" stroke-width=".9"/><path d="M3.5 3 H3 V10 H3.5 M9 3 H9.5 V10" stroke="#9aa0aa" stroke-width=".6" fill="none"/><rect x="4.5" y="3.5" width="3" height="2.5" fill="#3ec46d"/><rect x="4.5" y="7" width="3" height="2.5" fill="#3ec46d"/><path d="M8 6.5 L11.5 10 L9.8 10.2 L10.6 12 L9.8 12.3 L9 10.6 L8 11.5Z" fill="#f0f0f0"/></svg>
<div class="a" style="left:955px;top:81.60px;height:12px;line-height:12px;font-size:7.5px;color:#d4d8df;transform-origin:0 50%;transform:scaleX(0.875);">Группы</div>
<svg class="a" style="left:980px;top:86.6px;" width="5" height="3" viewBox="0 0 5 3"><path d="M0 0 H5 L2.5 3Z" fill="#d4d8df"/></svg>
<svg class="a" style="left:1005px;top:49px;" width="16.5" height="3.5" viewBox="0 0 16.5 3.5"><rect x="0" y="0" width="16.5" height="3.5" fill="#f2c458"/><path d="M2 0 V1.4 M4 0 V1.4 M6 0 V1.4 M8 0 V1.4 M10 0 V1.4 M12 0 V1.4 M14 0 V1.4" stroke="#b08a3a" stroke-width=".5"/></svg>
<div class="a" style="left:1013px;top:61.00px;height:12px;line-height:12px;font-size:7.5px;color:#d4d8df;transform-origin:50% 50%;transform:translateX(-50%) scaleX(0.875);">Измерить</div>
<svg class="a" style="left:1011px;top:72px;" width="4" height="3" viewBox="0 0 4 3"><path d="M0 0 H4 L2 2.5Z" fill="#c9cdd4"/></svg>
<svg class="a" style="left:1036px;top:41.5px;" width="11" height="11" viewBox="0 0 11 11"><path d="M0.5 2.5 L0.5 9 L2 7.6 L3.2 10 L4.2 9.5 L3 7.2 L5 7Z" fill="#eee"/><path d="M4.5 0 L5.2 1.8 L7 1.5 L5.8 2.8 L6.8 4.3 L5 3.8 L4.2 5.5 L3.8 3.7 L2 3.3 L3.8 2.6Z" fill="#f2c14e"/><rect x="5" y="4.5" width="6" height="6" fill="#9fd3f5" stroke="#eee" stroke-width=".8"/></svg>
<svg class="a" style="left:1036px;top:55px;" width="11" height="11" viewBox="0 0 11 11"><rect x="0" y="0" width="10" height="10" fill="#2f7a4e"/><rect x="2" y="2" width="2.5" height="6" fill="#6fd39a"/><rect x="5" y="2" width="3" height="3" fill="#6fd39a"/><path d="M5.5 4.5 L5.5 10.5 L6.8 9.3 L7.8 11 L8.6 10.6 L7.7 8.9 L9.5 8.7Z" fill="#eee"/></svg>
<svg class="a" style="left:1037.8px;top:68.5px;" width="8" height="11" viewBox="0 0 8 11"><rect x="0.5" y="0.5" width="6" height="9" fill="#bdbdbd" stroke="#e6e6e6" stroke-width=".8"/><rect x="1.8" y="1.8" width="4.4" height="2" fill="#555"/><path d="M1.8 5.5 H6.2 M1.8 7.2 H6.2 M1.8 8.9 H6.2 M3.3 4.6 V9.8 M4.8 4.6 V9.8" stroke="#888" stroke-width=".5"/></svg>
<div class="a" style="left:1004px;top:81.60px;height:12px;line-height:12px;font-size:7.5px;color:#d4d8df;transform-origin:0 50%;transform:scaleX(0.875);">Утилиты</div>
<svg class="a" style="left:1032px;top:86.6px;" width="5" height="3" viewBox="0 0 5 3"><path d="M0 0 H5 L2.5 3Z" fill="#d4d8df"/></svg>
<svg class="a" style="left:1062px;top:41px;" width="17" height="20" viewBox="0 0 17 20"><rect x="1" y="2" width="12" height="14.5" fill="#e8b061"/><path d="M4 3 Q4 0.5 7 0.5 Q10 0.5 10 3Z" fill="#eee"/><path d="M5 6.8 H12 L15 9.8 V19 H5Z" fill="#e0e0e0"/><path d="M12 6.8 V9.8 H15" fill="#f4f4f4"/></svg>
<div class="a" style="left:1070px;top:61.00px;height:12px;line-height:12px;font-size:7.5px;color:#d4d8df;transform-origin:50% 50%;transform:translateX(-50%) scaleX(0.875);">Вставить</div>
<svg class="a" style="left:1068px;top:72px;" width="4" height="3" viewBox="0 0 4 3"><path d="M0 0 H4 L2 2.5Z" fill="#c9cdd4"/></svg>
<svg class="a" style="left:1091px;top:41px;" width="11" height="11" viewBox="0 0 11 11"><path d="M0.5 0.5 H5.5 L7.5 2.5 V8 H0.5Z" fill="none" stroke="#d8d8d8" stroke-width=".8"/><path d="M2 3 H5.5 M2 4.6 H5.5" stroke="#d8d8d8" stroke-width=".6"/><path d="M6.5 6.5 L10 10 M10 6.5 L6.5 10" stroke="#d8d8d8" stroke-width="1"/></svg>
<svg class="a" style="left:1091.5px;top:54px;" width="10" height="11" viewBox="0 0 10 11"><rect x="0.5" y="0.5" width="6" height="7.5" fill="#9a9a9a"/><path d="M3 2.5 H7.5 L9.5 4.5 V10.5 H3Z" fill="#e6e6e6"/></svg>
<div class="a" style="left:1055px;top:81.60px;height:12px;line-height:12px;font-size:7.5px;color:#d4d8df;transform-origin:0 50%;transform:scaleX(0.875);">Буфер обмена</div>
<div class="a" style="left:10px;top:94.3px;width:70px;height:12px;background:#2d3441;border-radius:5px"></div>
<div class="a" style="left:18px;top:95.90px;height:12px;line-height:12px;font-size:7.2px;color:#c4c9d2;transform-origin:0 50%;transform:scaleX(0.875);">Начало</div>
<div class="a" style="left:82px;top:94.3px;width:84px;height:12px;background:#2d3441;border-radius:5px"></div>
<div class="a" style="left:87px;top:95.90px;height:12px;line-height:12px;font-size:7.2px;color:#c4c9d2;transform-origin:0 50%;transform:scaleX(0.875);">1 путь_поперечники*</div>
<svg class="a" style="left:155px;top:98.5px;" width="6" height="6" viewBox="0 0 6 6"><path d="M0.5 0.5 L5.5 5.5 M5.5 0.5 L0.5 5.5" stroke="#d0d4da" stroke-width="1.1"/></svg>
<div class="a" style="left:168px;top:94.3px;width:86px;height:12px;background:#2d3441;border-radius:5px"></div>
<div class="a" style="left:174px;top:95.90px;height:12px;line-height:12px;font-size:7.2px;color:#c4c9d2;transform-origin:0 50%;transform:scaleX(0.875);">5 путь_поперечники*</div>
<svg class="a" style="left:242px;top:98.5px;" width="6" height="6" viewBox="0 0 6 6"><path d="M0.5 0.5 L5.5 5.5 M5.5 0.5 L0.5 5.5" stroke="#d0d4da" stroke-width="1.1"/></svg>
<div class="a" style="left:256px;top:94.3px;width:95px;height:12px;background:#2d3441;border-radius:5px"></div>
<div class="a" style="left:261px;top:95.90px;height:12px;line-height:12px;font-size:7.2px;color:#c4c9d2;transform-origin:0 50%;transform:scaleX(0.875);">1 путь_профиль_лоток2*</div>
<svg class="a" style="left:338px;top:98.5px;" width="6" height="6" viewBox="0 0 6 6"><path d="M0.5 0.5 L5.5 5.5 M5.5 0.5 L0.5 5.5" stroke="#d0d4da" stroke-width="1.1"/></svg>
<div class="a" style="left:353px;top:94.3px;width:67px;height:12px;background:#2d3441;border-radius:5px"></div>
<div class="a" style="left:357px;top:95.90px;height:12px;line-height:12px;font-size:7.2px;color:#c4c9d2;transform-origin:0 50%;transform:scaleX(0.875);">1 путь_профиль</div>
<svg class="a" style="left:408px;top:98.5px;" width="6" height="6" viewBox="0 0 6 6"><path d="M0.5 0.5 L5.5 5.5 M5.5 0.5 L0.5 5.5" stroke="#d0d4da" stroke-width="1.1"/></svg>
<div class="a" style="left:421px;top:94.3px;width:119px;height:12px;background:#3b4453;border-radius:5px"></div>
<div class="a" style="left:427px;top:95.90px;height:12px;line-height:12px;font-size:7.2px;color:#ffffff;font-weight:bold;transform-origin:0 50%;transform:scaleX(0.875);">Конструкция путевого упора*</div>
<svg class="a" style="left:528px;top:98.5px;" width="6" height="6" viewBox="0 0 6 6"><path d="M0.5 0.5 L5.5 5.5 M5.5 0.5 L0.5 5.5" stroke="#d0d4da" stroke-width="1.1"/></svg>
<div class="a" style="left:543px;top:95.5px;width:15px;height:10.5px;background:#2d3441;border-radius:4px"></div>
<svg class="a" style="left:548px;top:97.8px;" width="6" height="6" viewBox="0 0 6 6"><path d="M3 0 V6 M0 3 H6" stroke="#b9bec7" stroke-width="1"/></svg>
<div class="a" style="left:0px;top:109px;width:187px;height:653px;background:#3b4453;"></div>
<div class="a" style="left:0px;top:109px;width:1px;height:653px;background:#2a2f38;"></div>
<div class="a" style="left:1px;top:109px;width:185px;height:13.5px;background:#2a303b;"></div>
<div class="a" style="left:9px;top:109.80px;height:12px;line-height:12px;font-size:7.2px;color:#dfe3ea;transform-origin:0 50%;transform:scaleX(0.82);">СВОЙСТВА</div>
<div class="a" style="left:11px;top:129px;width:133px;height:11.6px;background:#4b5467;"></div>
<div class="a" style="left:13px;top:129.30px;height:12px;line-height:12px;font-size:7.5px;color:#e6e9ee;transform-origin:0 50%;transform:scaleX(0.875);">Ничего не выбрано</div>
<svg class="a" style="left:137px;top:134px;" width="6" height="3.5" viewBox="0 0 6 3.5"><path d="M0 0 H6 L3 3.5Z" fill="#e6e9ee"/></svg>
<svg class="a" style="left:148px;top:130px;" width="10" height="10" viewBox="0 0 10 10"><rect x="0" y="1" width="5" height="5" fill="#eee"/><rect x="4" y="4" width="6" height="6" fill="#5bb4ec"/><path d="M7 0 Q10 0 9 4" stroke="#5bb4ec" fill="none"/></svg>
<svg class="a" style="left:159px;top:130px;" width="10" height="10" viewBox="0 0 10 10"><rect x="0" y="1" width="7" height="5" fill="#5cc87a"/><path d="M6 5 L10 10 L7.5 9.5Z" fill="#eee"/></svg>
<svg class="a" style="left:171px;top:130px;" width="10" height="10" viewBox="0 0 10 10"><circle cx="3" cy="2" r="2" fill="#f2c14e"/><rect x="3" y="4" width="7" height="6" fill="#8ec8ee" stroke="#eee" stroke-width=".8"/><path d="M0 3 L3 8" stroke="#eee"/></svg>
<div class="a" style="left:10.5px;top:144px;width:169px;height:11.6px;background:#2a303b;"></div>
<div class="a" style="left:14px;top:144.50px;height:12px;line-height:12px;font-size:7.5px;color:#f0f2f5;font-weight:bold;transform-origin:0 50%;transform:scaleX(0.9);">Общие</div>
<svg class="a" style="left:171px;top:148.5px;" width="5" height="3" viewBox="0 0 5 3"><path d="M0 0 H5 L2.5 3Z" fill="#dfe3ea"/></svg>
<div class="a" style="left:20.5px;top:155.6px;width:159.5px;height:81.5px;background:#2e3541;"></div>
<div class="a" style="left:21.5px;top:156.6px;width:70.5px;height:10.5px;background:#3b4453;"></div>
<div class="a" style="left:93px;top:156.6px;width:86px;height:10.5px;background:#3b4453;"></div>
<div class="a" style="left:24px;top:155.60px;height:12px;line-height:12px;font-size:7.5px;color:#c9ced6;transform-origin:0 50%;transform:scaleX(0.875);">Цвет</div>
<div class="a" style="left:95.5px;top:157.6px;width:8px;height:8px;background:#000;"></div>
<div class="a" style="left:106.5px;top:155.60px;height:12px;line-height:12px;font-size:7.5px;color:#e6e9ee;transform-origin:0 50%;transform:scaleX(0.875);">ПоСлою</div>
<div class="a" style="left:21.5px;top:168.1px;width:70.5px;height:10.5px;background:#3b4453;"></div>
<div class="a" style="left:93px;top:168.1px;width:86px;height:10.5px;background:#3b4453;"></div>
<div class="a" style="left:24px;top:167.10px;height:12px;line-height:12px;font-size:7.5px;color:#c9ced6;transform-origin:0 50%;transform:scaleX(0.875);">Слой</div>
<div class="a" style="left:95px;top:167.10px;height:12px;line-height:12px;font-size:7.5px;color:#e6e9ee;transform-origin:0 50%;transform:scaleX(0.875);">Начальный слой</div>
<div class="a" style="left:21.5px;top:179.6px;width:70.5px;height:10.5px;background:#3b4453;"></div>
<div class="a" style="left:93px;top:179.6px;width:86px;height:10.5px;background:#3b4453;"></div>
<div class="a" style="left:24px;top:178.60px;height:12px;line-height:12px;font-size:7.5px;color:#c9ced6;transform-origin:0 50%;transform:scaleX(0.875);">Тип линий</div>
<div class="a" style="left:97px;top:184.1px;width:33px;height:1px;background:#e6e9ee;"></div>
<div class="a" style="left:134px;top:178.60px;height:12px;line-height:12px;font-size:7.5px;color:#e6e9ee;transform-origin:0 50%;transform:scaleX(0.875);">ПоСлою</div>
<div class="a" style="left:21.5px;top:191.1px;width:70.5px;height:10.5px;background:#3b4453;"></div>
<div class="a" style="left:93px;top:191.1px;width:86px;height:10.5px;background:#3b4453;"></div>
<div class="a" style="left:24px;top:190.10px;height:12px;line-height:12px;font-size:7.5px;color:#c9ced6;transform-origin:0 50%;transform:scaleX(0.875);">Масштаб типа линий</div>
<div class="a" style="left:95px;top:190.10px;height:12px;line-height:12px;font-size:7.5px;color:#e6e9ee;transform-origin:0 50%;transform:scaleX(0.875);">1</div>
<div class="a" style="left:21.5px;top:202.6px;width:70.5px;height:10.5px;background:#3b4453;"></div>
<div class="a" style="left:93px;top:202.6px;width:86px;height:10.5px;background:#3b4453;"></div>
<div class="a" style="left:24px;top:201.60px;height:12px;line-height:12px;font-size:7.5px;color:#c9ced6;transform-origin:0 50%;transform:scaleX(0.875);">Вес линий</div>
<div class="a" style="left:97px;top:207.1px;width:33px;height:1px;background:#e6e9ee;"></div>
<div class="a" style="left:134px;top:201.60px;height:12px;line-height:12px;font-size:7.5px;color:#e6e9ee;transform-origin:0 50%;transform:scaleX(0.875);">ПоСлою</div>
<div class="a" style="left:21.5px;top:214.1px;width:70.5px;height:10.5px;background:#3b4453;"></div>
<div class="a" style="left:93px;top:214.1px;width:86px;height:10.5px;background:#3b4453;"></div>
<div class="a" style="left:24px;top:213.10px;height:12px;line-height:12px;font-size:7.5px;color:#c9ced6;transform-origin:0 50%;transform:scaleX(0.875);">Прозрачность</div>
<div class="a" style="left:95px;top:213.10px;height:12px;line-height:12px;font-size:7.5px;color:#e6e9ee;transform-origin:0 50%;transform:scaleX(0.875);">ПоСлою</div>
<div class="a" style="left:21.5px;top:225.6px;width:70.5px;height:10.5px;background:#3b4453;"></div>
<div class="a" style="left:93px;top:225.6px;width:86px;height:10.5px;background:#3b4453;"></div>
<div class="a" style="left:24px;top:224.60px;height:12px;line-height:12px;font-size:7.5px;color:#c9ced6;transform-origin:0 50%;transform:scaleX(0.875);">Толщина</div>
<div class="a" style="left:95px;top:224.60px;height:12px;line-height:12px;font-size:7.5px;color:#e6e9ee;transform-origin:0 50%;transform:scaleX(0.875);">0</div>
<div class="a" style="left:10.5px;top:238px;width:169px;height:11.6px;background:#2a303b;"></div>
<div class="a" style="left:14px;top:238.50px;height:12px;line-height:12px;font-size:7.5px;color:#f0f2f5;font-weight:bold;transform-origin:0 50%;transform:scaleX(0.9);">3D-визуализация</div>
<svg class="a" style="left:171px;top:242.5px;" width="5" height="3" viewBox="0 0 5 3"><path d="M0 0 H5 L2.5 3Z" fill="#dfe3ea"/></svg>
<div class="a" style="left:20.5px;top:249.6px;width:159.5px;height:12.5px;background:#2e3541;"></div>
<div class="a" style="left:21.5px;top:250.6px;width:70.5px;height:10.5px;background:#3b4453;"></div>
<div class="a" style="left:93px;top:250.6px;width:86px;height:10.5px;background:#3b4453;"></div>
<div class="a" style="left:24px;top:249.60px;height:12px;line-height:12px;font-size:7.5px;color:#c9ced6;transform-origin:0 50%;transform:scaleX(0.875);">Материал</div>
<div class="a" style="left:95px;top:249.60px;height:12px;line-height:12px;font-size:7.5px;color:#e6e9ee;transform-origin:0 50%;transform:scaleX(0.875);">ПоСлою</div>
<div class="a" style="left:10.5px;top:263.3px;width:169px;height:11.6px;background:#2a303b;"></div>
<div class="a" style="left:14px;top:263.80px;height:12px;line-height:12px;font-size:7.5px;color:#f0f2f5;font-weight:bold;transform-origin:0 50%;transform:scaleX(0.9);">Лист</div>
<svg class="a" style="left:171px;top:267.8px;" width="5" height="3" viewBox="0 0 5 3"><path d="M0 0 H5 L2.5 3Z" fill="#dfe3ea"/></svg>
<div class="a" style="left:20.5px;top:275px;width:159.5px;height:35.5px;background:#2e3541;"></div>
<div class="a" style="left:21.5px;top:276.0px;width:70.5px;height:10.5px;background:#3b4453;"></div>
<div class="a" style="left:93px;top:276.0px;width:86px;height:10.5px;background:#3b4453;"></div>
<div class="a" style="left:24px;top:275.00px;height:12px;line-height:12px;font-size:7.5px;color:#c9ced6;transform-origin:0 50%;transform:scaleX(0.875);">Имя листа</div>
<div class="a" style="left:95px;top:275.00px;height:12px;line-height:12px;font-size:7.5px;color:#e6e9ee;transform-origin:0 50%;transform:scaleX(0.875);">Лист1</div>
<div class="a" style="left:21.5px;top:287.5px;width:70.5px;height:10.5px;background:#3b4453;"></div>
<div class="a" style="left:93px;top:287.5px;width:86px;height:10.5px;background:#3b4453;"></div>
<div class="a" style="left:24px;top:286.50px;height:12px;line-height:12px;font-size:7.5px;color:#c9ced6;transform-origin:0 50%;transform:scaleX(0.875);">Набор  параметров...</div>
<div class="a" style="left:95px;top:286.50px;height:12px;line-height:12px;font-size:7.5px;color:#8e95a2;transform-origin:0 50%;transform:scaleX(0.875);">&lt;Нет&gt;</div>
<div class="a" style="left:21.5px;top:299.0px;width:70.5px;height:10.5px;background:#3b4453;"></div>
<div class="a" style="left:93px;top:299.0px;width:86px;height:10.5px;background:#3b4453;"></div>
<div class="a" style="left:24px;top:298.00px;height:12px;line-height:12px;font-size:7.5px;color:#c9ced6;transform-origin:0 50%;transform:scaleX(0.875);">Растровое  разреше...</div>
<div class="a" style="left:95px;top:298.00px;height:12px;line-height:12px;font-size:7.5px;color:#e6e9ee;transform-origin:0 50%;transform:scaleX(0.875);">300</div>
<div class="a" style="left:10.5px;top:311px;width:169px;height:11.6px;background:#2a303b;"></div>
<div class="a" style="left:14px;top:311.50px;height:12px;line-height:12px;font-size:7.5px;color:#f0f2f5;font-weight:bold;transform-origin:0 50%;transform:scaleX(0.9);">Стиль печати</div>
<svg class="a" style="left:171px;top:315.5px;" width="5" height="3" viewBox="0 0 5 3"><path d="M0 0 H5 L2.5 3Z" fill="#dfe3ea"/></svg>
<div class="a" style="left:20.5px;top:322.6px;width:159.5px;height:47.0px;background:#2e3541;"></div>
<div class="a" style="left:21.5px;top:323.6px;width:70.5px;height:10.5px;background:#3b4453;"></div>
<div class="a" style="left:93px;top:323.6px;width:86px;height:10.5px;background:#3b4453;"></div>
<div class="a" style="left:24px;top:322.60px;height:12px;line-height:12px;font-size:7.5px;color:#c9ced6;transform-origin:0 50%;transform:scaleX(0.875);">Стиль печати</div>
<div class="a" style="left:95px;top:322.60px;height:12px;line-height:12px;font-size:7.5px;color:#8e95a2;transform-origin:0 50%;transform:scaleX(0.875);">ПоЦвету</div>
<div class="a" style="left:21.5px;top:335.1px;width:70.5px;height:10.5px;background:#3b4453;"></div>
<div class="a" style="left:93px;top:335.1px;width:86px;height:10.5px;background:#3b4453;"></div>
<div class="a" style="left:24px;top:334.10px;height:12px;line-height:12px;font-size:7.5px;color:#c9ced6;transform-origin:0 50%;transform:scaleX(0.875);">Таблица  стилей  печ...</div>
<div class="a" style="left:95px;top:334.10px;height:12px;line-height:12px;font-size:7.5px;color:#e6e9ee;transform-origin:0 50%;transform:scaleX(0.875);">Нет</div>
<div class="a" style="left:21.5px;top:346.6px;width:70.5px;height:10.5px;background:#3b4453;"></div>
<div class="a" style="left:93px;top:346.6px;width:86px;height:10.5px;background:#3b4453;"></div>
<div class="a" style="left:24px;top:345.60px;height:12px;line-height:12px;font-size:7.5px;color:#c9ced6;transform-origin:0 50%;transform:scaleX(0.875);">Пространство  табл...</div>
<div class="a" style="left:95px;top:345.60px;height:12px;line-height:12px;font-size:7.5px;color:#8e95a2;transform-origin:0 50%;transform:scaleX(0.875);">Лист1</div>
<div class="a" style="left:21.5px;top:358.1px;width:70.5px;height:10.5px;background:#3b4453;"></div>
<div class="a" style="left:93px;top:358.1px;width:86px;height:10.5px;background:#3b4453;"></div>
<div class="a" style="left:24px;top:357.10px;height:12px;line-height:12px;font-size:7.5px;color:#c9ced6;transform-origin:0 50%;transform:scaleX(0.875);">Тип стилей печати</div>
<div class="a" style="left:95px;top:357.10px;height:12px;line-height:12px;font-size:7.5px;color:#8e95a2;transform-origin:0 50%;transform:scaleX(0.875);">Недоступно</div>
<div class="a" style="left:10.5px;top:371px;width:169px;height:11.6px;background:#2a303b;"></div>
<div class="a" style="left:14px;top:371.50px;height:12px;line-height:12px;font-size:7.5px;color:#f0f2f5;font-weight:bold;transform-origin:0 50%;transform:scaleX(0.9);">Вид</div>
<svg class="a" style="left:171px;top:375.5px;" width="5" height="3" viewBox="0 0 5 3"><path d="M0 0 H5 L2.5 3Z" fill="#dfe3ea"/></svg>
<div class="a" style="left:20.5px;top:382.6px;width:159.5px;height:58.5px;background:#2e3541;"></div>
<div class="a" style="left:21.5px;top:383.6px;width:70.5px;height:10.5px;background:#3b4453;"></div>
<div class="a" style="left:93px;top:383.6px;width:86px;height:10.5px;background:#3b4453;"></div>
<div class="a" style="left:24px;top:382.60px;height:12px;line-height:12px;font-size:7.5px;color:#c9ced6;transform-origin:0 50%;transform:scaleX(0.875);">Центр X</div>
<div class="a" style="left:95px;top:382.60px;height:12px;line-height:12px;font-size:7.5px;color:#8e95a2;transform-origin:0 50%;transform:scaleX(0.875);">193.12</div>
<div class="a" style="left:21.5px;top:395.1px;width:70.5px;height:10.5px;background:#3b4453;"></div>
<div class="a" style="left:93px;top:395.1px;width:86px;height:10.5px;background:#3b4453;"></div>
<div class="a" style="left:24px;top:394.10px;height:12px;line-height:12px;font-size:7.5px;color:#c9ced6;transform-origin:0 50%;transform:scaleX(0.875);">Центр Y</div>
<div class="a" style="left:95px;top:394.10px;height:12px;line-height:12px;font-size:7.5px;color:#8e95a2;transform-origin:0 50%;transform:scaleX(0.875);">119.13</div>
<div class="a" style="left:21.5px;top:406.6px;width:70.5px;height:10.5px;background:#3b4453;"></div>
<div class="a" style="left:93px;top:406.6px;width:86px;height:10.5px;background:#3b4453;"></div>
<div class="a" style="left:24px;top:405.60px;height:12px;line-height:12px;font-size:7.5px;color:#c9ced6;transform-origin:0 50%;transform:scaleX(0.875);">Центр Z</div>
<div class="a" style="left:95px;top:405.60px;height:12px;line-height:12px;font-size:7.5px;color:#8e95a2;transform-origin:0 50%;transform:scaleX(0.875);">0</div>
<div class="a" style="left:21.5px;top:418.1px;width:70.5px;height:10.5px;background:#3b4453;"></div>
<div class="a" style="left:93px;top:418.1px;width:86px;height:10.5px;background:#3b4453;"></div>
<div class="a" style="left:24px;top:417.10px;height:12px;line-height:12px;font-size:7.5px;color:#c9ced6;transform-origin:0 50%;transform:scaleX(0.875);">Высота</div>
<div class="a" style="left:95px;top:417.10px;height:12px;line-height:12px;font-size:7.5px;color:#8e95a2;transform-origin:0 50%;transform:scaleX(0.875);">354.66</div>
<div class="a" style="left:21.5px;top:429.6px;width:70.5px;height:10.5px;background:#3b4453;"></div>
<div class="a" style="left:93px;top:429.6px;width:86px;height:10.5px;background:#3b4453;"></div>
<div class="a" style="left:24px;top:428.60px;height:12px;line-height:12px;font-size:7.5px;color:#c9ced6;transform-origin:0 50%;transform:scaleX(0.875);">Ширина</div>
<div class="a" style="left:95px;top:428.60px;height:12px;line-height:12px;font-size:7.5px;color:#8e95a2;transform-origin:0 50%;transform:scaleX(0.875);">653.8</div>
<div class="a" style="left:10.5px;top:442px;width:169px;height:11.6px;background:#2a303b;"></div>
<div class="a" style="left:14px;top:442.50px;height:12px;line-height:12px;font-size:7.5px;color:#f0f2f5;font-weight:bold;transform-origin:0 50%;transform:scaleX(0.9);">Разное</div>
<svg class="a" style="left:171px;top:446.5px;" width="5" height="3" viewBox="0 0 5 3"><path d="M0 0 H5 L2.5 3Z" fill="#dfe3ea"/></svg>
<div class="a" style="left:20.5px;top:453.6px;width:159.5px;height:70.0px;background:#2e3541;"></div>
<div class="a" style="left:21.5px;top:454.6px;width:70.5px;height:10.5px;background:#3b4453;"></div>
<div class="a" style="left:93px;top:454.6px;width:86px;height:10.5px;background:#3b4453;"></div>
<div class="a" style="left:24px;top:453.60px;height:12px;line-height:12px;font-size:7.5px;color:#c9ced6;transform-origin:0 50%;transform:scaleX(0.875);">Масштаб аннотаций</div>
<div class="a" style="left:95px;top:453.60px;height:12px;line-height:12px;font-size:7.5px;color:#8e95a2;transform-origin:0 50%;transform:scaleX(0.875);">1:1</div>
<div class="a" style="left:21.5px;top:466.1px;width:70.5px;height:10.5px;background:#3b4453;"></div>
<div class="a" style="left:93px;top:466.1px;width:86px;height:10.5px;background:#3b4453;"></div>
<div class="a" style="left:24px;top:465.10px;height:12px;line-height:12px;font-size:7.5px;color:#c9ced6;transform-origin:0 50%;transform:scaleX(0.875);">Знак ПСК ВКЛ</div>
<div class="a" style="left:95px;top:465.10px;height:12px;line-height:12px;font-size:7.5px;color:#e6e9ee;transform-origin:0 50%;transform:scaleX(0.875);">Да</div>
<div class="a" style="left:21.5px;top:477.6px;width:70.5px;height:10.5px;background:#3b4453;"></div>
<div class="a" style="left:93px;top:477.6px;width:86px;height:10.5px;background:#3b4453;"></div>
<div class="a" style="left:24px;top:476.60px;height:12px;line-height:12px;font-size:7.5px;color:#c9ced6;transform-origin:0 50%;transform:scaleX(0.875);">Знак ПСК в нач. ко...</div>
<div class="a" style="left:95px;top:476.60px;height:12px;line-height:12px;font-size:7.5px;color:#e6e9ee;transform-origin:0 50%;transform:scaleX(0.875);">Нет</div>
<div class="a" style="left:21.5px;top:489.1px;width:70.5px;height:10.5px;background:#3b4453;"></div>
<div class="a" style="left:93px;top:489.1px;width:86px;height:10.5px;background:#3b4453;"></div>
<div class="a" style="left:24px;top:488.10px;height:12px;line-height:12px;font-size:7.5px;color:#c9ced6;transform-origin:0 50%;transform:scaleX(0.875);">ПСК в каждом Вэкр...</div>
<div class="a" style="left:95px;top:488.10px;height:12px;line-height:12px;font-size:7.5px;color:#e6e9ee;transform-origin:0 50%;transform:scaleX(0.875);">Да</div>
<div class="a" style="left:21.5px;top:500.6px;width:70.5px;height:10.5px;background:#3b4453;"></div>
<div class="a" style="left:93px;top:500.6px;width:86px;height:10.5px;background:#3b4453;"></div>
<div class="a" style="left:24px;top:499.60px;height:12px;line-height:12px;font-size:7.5px;color:#c9ced6;transform-origin:0 50%;transform:scaleX(0.875);">Имя ПСК</div>
<div class="a" style="left:95px;top:499.60px;height:12px;line-height:12px;font-size:7.5px;color:#e6e9ee;transform-origin:0 50%;transform:scaleX(0.875);"></div>
<div class="a" style="left:21.5px;top:512.1px;width:70.5px;height:10.5px;background:#3b4453;"></div>
<div class="a" style="left:93px;top:512.1px;width:86px;height:10.5px;background:#3b4453;"></div>
<div class="a" style="left:24px;top:511.10px;height:12px;line-height:12px;font-size:7.5px;color:#c9ced6;transform-origin:0 50%;transform:scaleX(0.875);">Визуальный стиль</div>
<div class="a" style="left:95px;top:511.10px;height:12px;line-height:12px;font-size:7.5px;color:#8e95a2;transform-origin:0 50%;transform:scaleX(0.875);">2D-каркас</div>
<div class="a" style="left:187.3px;top:109px;width:14.4px;height:249.5px;background:#2c323d;"></div>
<div class="a" style="left:188.3px;top:110px;width:12.4px;height:247.5px;background:#3b4453;"></div>
<div class="a" style="left:189.5px;top:110.8px;width:8px;height:1.6px;background:#9aa0aa;"></div>
<div class="a" style="left:187.3px;top:360.5px;width:14.4px;height:271.0px;background:#2c323d;"></div>
<div class="a" style="left:188.3px;top:361.5px;width:12.4px;height:269.0px;background:#3b4453;"></div>
<div class="a" style="left:189.5px;top:362.3px;width:8px;height:1.6px;background:#9aa0aa;"></div>
<div class="a" style="left:187.3px;top:633.5px;width:14.4px;height:67.0px;background:#2c323d;"></div>
<div class="a" style="left:188.3px;top:634.5px;width:12.4px;height:65.0px;background:#3b4453;"></div>
<div class="a" style="left:189.5px;top:635.3px;width:8px;height:1.6px;background:#9aa0aa;"></div>
<div class="a" style="left:189px;top:698.3px;width:11px;height:1px;background:#b8bdc5;"></div>
<svg class="a" style="left:189.5px;top:115.0px;" width="10" height="10" viewBox="0 0 10 10"><path d="M1 9 L9 1" stroke="#c8ccd3" stroke-width=".8"/><rect x="0" y="8" width="2" height="2" fill="#5a9fd4"/><rect x="8" y="0" width="2" height="2" fill="#5a9fd4"/></svg>
<svg class="a" style="left:189.5px;top:127.0px;" width="10" height="10" viewBox="0 0 10 10"><path d="M1 9 L9 1" stroke="#c8ccd3" stroke-width=".8"/><path d="M0 10 L0 7 L3 10Z M10 0 L10 3 L7 0Z" fill="#eee"/><rect x="4" y="4" width="2" height="2" fill="#5a9fd4"/></svg>
<svg class="a" style="left:189.5px;top:139.4px;" width="10" height="10" viewBox="0 0 10 10"><path d="M1 8 H6 Q9 8 9 5 Q9 2 6 2" stroke="#c8ccd3" stroke-width=".8" fill="none"/><rect x="0" y="7" width="2" height="2" fill="#5a9fd4"/><rect x="5" y="7" width="2" height="2" fill="#5a9fd4"/><rect x="5" y="1" width="2" height="2" fill="#5a9fd4"/></svg>
<svg class="a" style="left:189.5px;top:151.3px;" width="10" height="10" viewBox="0 0 10 10"><path d="M5 0.8 L9.3 4 L7.6 9.2 H2.4 L0.7 4Z" stroke="#c8ccd3" stroke-width=".8" fill="none"/><rect x="4" y="4.5" width="2" height="1.2" fill="#5a9fd4"/></svg>
<svg class="a" style="left:189.5px;top:164.0px;" width="10" height="10" viewBox="0 0 10 10"><rect x=".8" y="1.5" width="8.4" height="7" stroke="#c8ccd3" stroke-width=".8" fill="none"/><rect x="0" y="0.7" width="1.6" height="1.6" fill="#5a9fd4"/><rect x="8.4" y="7.7" width="1.6" height="1.6" fill="#5a9fd4"/></svg>
<svg class="a" style="left:189.5px;top:176.0px;" width="10" height="10" viewBox="0 0 10 10"><path d="M1 9 Q2 2 9 1" stroke="#c8ccd3" stroke-width=".8" fill="none"/><rect x="0" y="8" width="2" height="2" fill="#5a9fd4"/><rect x="2.5" y="3.5" width="1.8" height="1.8" fill="#5a9fd4"/><rect x="8" y="0" width="2" height="2" fill="#5a9fd4"/></svg>
<svg class="a" style="left:189.5px;top:188.0px;" width="10" height="10" viewBox="0 0 10 10"><circle cx="5" cy="5" r="4.3" stroke="#c8ccd3" stroke-width=".8" fill="none"/><path d="M5 5 L8 2" stroke="#5a9fd4"/><rect x="4" y="4" width="2" height="2" fill="#5a9fd4"/></svg>
<svg class="a" style="left:189.5px;top:200.0px;" width="10" height="10" viewBox="0 0 10 10"><path d="M1.5 3 Q3 1 5 1.5 Q8 1 9 3.5 Q9.5 7 7 8.5 Q4 9.5 2 8 Q0.3 5.5 1.5 3Z" stroke="#c8ccd3" stroke-width=".8" fill="none" stroke-dasharray="1.5 .4"/></svg>
<svg class="a" style="left:189.5px;top:211.0px;" width="10" height="10" viewBox="0 0 10 10"><path d="M1 9 L4 5 L6 6 L9 1" stroke="#5a9fd4" stroke-width=".8" fill="none"/><rect x="0" y="8" width="2" height="2" fill="#5a9fd4"/><rect x="8" y="0" width="2" height="2" fill="#5a9fd4"/></svg>
<svg class="a" style="left:189.5px;top:223.0px;" width="10" height="10" viewBox="0 0 10 10"><ellipse cx="5" cy="5" rx="4.4" ry="2.8" stroke="#c8ccd3" stroke-width=".8" fill="none"/><rect x="4" y="4" width="2" height="2" fill="#5a9fd4"/></svg>
<svg class="a" style="left:189.5px;top:236.0px;" width="10" height="10" viewBox="0 0 10 10"><path d="M7 7 Q1 8 1 5 Q1 2 5 2 Q9 2 9 4.5" stroke="#c8ccd3" stroke-width=".8" fill="none"/><rect x="4" y="4" width="1.6" height="1.6" fill="#5a9fd4"/><rect x="6.5" y="6.5" width="1.6" height="1.6" fill="#5a9fd4"/></svg>
<svg class="a" style="left:189.5px;top:248.0px;" width="10" height="10" viewBox="0 0 10 10"><rect x="4" y="0" width="6" height="8" fill="#5bb4ec"/><rect x="0" y="4" width="7" height="5" fill="#8a909a"/><rect x="1" y="5" width="5" height="3" fill="#cfd3d9"/></svg>
<svg class="a" style="left:189.5px;top:261.0px;" width="10" height="10" viewBox="0 0 10 10"><rect x="0" y="3" width="7" height="6" fill="#8a909a"/><rect x="1" y="4" width="5" height="4" fill="#cfd3d9"/><circle cx="8" cy="2" r="2" fill="#f2c14e"/><circle cx="6" cy="8" r="2" fill="none" stroke="#999" stroke-width=".7"/></svg>
<svg class="a" style="left:189.5px;top:274.0px;" width="10" height="10" viewBox="0 0 10 10"><path d="M5 1 V3 M5 7 V9 M1 5 H3 M7 5 H9" stroke="#c8ccd3" stroke-width=".8"/></svg>
<svg class="a" style="left:189.5px;top:285.5px;" width="10" height="10" viewBox="0 0 10 10"><rect x=".5" y=".5" width="9" height="9" fill="#3e6e9e" stroke="#d5d9df" stroke-width=".6"/><path d="M1 3 L3 1 M1 6 L6 1 M1 9 L9 1 M4 9 L9 4 M7 9 L9 7" stroke="#2a4a6e" stroke-width=".6"/></svg>
<svg class="a" style="left:189.5px;top:297.5px;" width="10" height="10" viewBox="0 0 10 10"><rect x=".5" y=".5" width="9" height="9" fill="none" stroke="#d5d9df" stroke-width=".6"/><rect x="1" y="1" width="8" height="6" fill="#5bb4ec"/></svg>
<svg class="a" style="left:189.5px;top:310.0px;" width="10" height="10" viewBox="0 0 10 10"><path d="M0.5 1 H6.5 L9.5 4 V9.5 H0.5Z" fill="#f0f0f0"/><circle cx="4" cy="6" r="1.4" fill="#333"/></svg>
<svg class="a" style="left:189.5px;top:322.0px;" width="10" height="10" viewBox="0 0 10 10"><rect x=".5" y="1" width="9" height="8" stroke="#c8ccd3" stroke-width=".7" fill="none"/><path d="M.5 3.5 H9.5 M3.5 1 V9 M6.5 1 V9" stroke="#c8ccd3" stroke-width=".5"/></svg>
<svg class="a" style="left:189.5px;top:333.5px;" width="10" height="11" viewBox="0 0 10 11"><text x="5" y="10" font-size="11.5" text-anchor="middle" font-family="Liberation Sans" fill="#e8eaee">A</text></svg>
<svg class="a" style="left:189.5px;top:346.0px;" width="10" height="10" viewBox="0 0 10 10"><circle cx="2.8" cy="3" r="2.5" fill="#3ec46d"/><circle cx="7" cy="7" r="2.8" fill="#8ec8ee"/><path d="M6 1 V4 M4.5 2.5 H7.5" stroke="#eee" stroke-width=".6"/></svg>
<svg class="a" style="left:189.5px;top:364.0px;" width="10" height="10" viewBox="0 0 10 10"><path d="M.8 1 V9 M9.2 1 V9" stroke="#c8ccd3" stroke-width=".7"/><path d="M.8 4.5 H9.2" stroke="#5a9fd4" stroke-width=".8"/></svg>
<svg class="a" style="left:189.5px;top:376.0px;" width="10" height="10" viewBox="0 0 10 10"><path d="M1 3 L3 1 M7 9 L9 7" stroke="#c8ccd3" stroke-width=".7"/><path d="M2 2 L8 8" stroke="#5a9fd4" stroke-width=".8"/></svg>
<svg class="a" style="left:189.5px;top:388.0px;" width="10" height="10" viewBox="0 0 10 10"><path d="M1 9 Q2 2 9 1" stroke="#5a9fd4" stroke-width=".9" fill="none"/><path d="M3 9 Q4 4 9 3" stroke="#c8ccd3" stroke-width=".6" fill="none"/></svg>
<svg class="a" style="left:189.5px;top:400.5px;" width="10" height="10" viewBox="0 0 10 10"><path d="M1 0 V9 H10" stroke="#c8ccd3" stroke-width=".7" fill="none"/><path d="M5 1 V8 M2 5 H8" stroke="#5a9fd4" stroke-width=".8"/></svg>
<div class="a" style="left:189px;top:414px;width:11px;height:1px;background:#9aa0aa;"></div>
<svg class="a" style="left:189.5px;top:417.0px;" width="10" height="10" viewBox="0 0 10 10"><path d="M1 9 Q2 2 9 1" stroke="#c8ccd3" stroke-width=".7" fill="none"/><path d="M3 3 L9 9" stroke="#5a9fd4" stroke-width=".8"/></svg>
<svg class="a" style="left:189.5px;top:428.0px;" width="10" height="10" viewBox="0 0 10 10"><path d="M1 9 Q2 2 9 1" stroke="#c8ccd3" stroke-width=".7" fill="none"/><path d="M4 4 L6 5 L5 6 L8 8" stroke="#5a9fd4" stroke-width=".8" fill="none"/></svg>
<svg class="a" style="left:189.5px;top:440.6px;" width="10" height="10" viewBox="0 0 10 10"><circle cx="5" cy="5" r="4.2" stroke="#c8ccd3" stroke-width=".7" fill="none"/><path d="M2 2 L8 8" stroke="#5a9fd4" stroke-width=".8"/></svg>
<svg class="a" style="left:189.5px;top:452.5px;" width="10" height="10" viewBox="0 0 10 10"><path d="M.5 9 H9.5 M.5 9 L7 2" stroke="#c8ccd3" stroke-width=".7" fill="none"/><path d="M5 4 Q8 6 7 9" stroke="#5a9fd4" stroke-width=".8" fill="none"/></svg>
<div class="a" style="left:189px;top:465.5px;width:11px;height:1px;background:#9aa0aa;"></div>
<svg class="a" style="left:189.5px;top:468.6px;" width="10" height="10" viewBox="0 0 10 10"><path d="M.8 1 V9 M9.2 1 V9 M.8 1.5 H9.2" stroke="#c8ccd3" stroke-width=".6"/><path d="M3 5 L6 3 L5 5 L7 5 L4 8 L5 6Z" fill="#f2b43c"/></svg>
<svg class="a" style="left:189.5px;top:478.4px;" width="10" height="10" viewBox="0 0 10 10"><path d="M.8 1 V9 M9.2 1 V9" stroke="#c8ccd3" stroke-width=".6"/><path d="M.8 3 H9.2 M.8 7 H9.2" stroke="#5a9fd4" stroke-width=".8"/></svg>
<svg class="a" style="left:189.5px;top:490.3px;" width="10" height="10" viewBox="0 0 10 10"><path d="M.8 1 V9 M5 1 V9 M9.2 1 V9" stroke="#c8ccd3" stroke-width=".6"/><path d="M.8 5 H9.2" stroke="#5a9fd4" stroke-width=".8"/></svg>
<svg class="a" style="left:189.5px;top:502.0px;" width="10" height="10" viewBox="0 0 10 10"><path d="M.5 1 H9.5 M.5 9 H9.5" stroke="#c8ccd3" stroke-width=".7"/><rect x="3.5" y="2.5" width="3" height="5" fill="#f2c14e"/></svg>
<svg class="a" style="left:189.5px;top:514.5px;" width="10" height="10" viewBox="0 0 10 10"><path d="M5 0 V10 M1 8 H9" stroke="#c8ccd3" stroke-width=".6"/><path d="M1 5 H9" stroke="#5a9fd4" stroke-width=".8"/><path d="M6 3 L9 5 L6 7Z" fill="#5a9fd4"/></svg>
<div class="a" style="left:189px;top:528.5px;width:11px;height:1px;background:#9aa0aa;"></div>
<svg class="a" style="left:189.5px;top:530.0px;" width="10" height="10" viewBox="0 0 10 10"><rect x=".5" y="1" width="9" height="7" stroke="#c8ccd3" stroke-width=".6" fill="none"/><path d="M2 4.5 L5 3 V6Z" fill="#eee"/><path d="M7 2 V7" stroke="#eee"/></svg>
<svg class="a" style="left:189.5px;top:542.3px;" width="10" height="10" viewBox="0 0 10 10"><circle cx="5" cy="5" r="4.2" stroke="#c8ccd3" stroke-width=".6" fill="none"/><circle cx="5" cy="5" r="1" fill="#5a9fd4"/></svg>
<svg class="a" style="left:189.5px;top:554.2px;" width="10" height="10" viewBox="0 0 10 10"><path d="M.8 1 V9 M9.2 1 V9 M.8 1.5 H9.2" stroke="#c8ccd3" stroke-width=".6"/><path d="M2.5 5 L4.5 7 L8 3.5" stroke="#3ec46d" stroke-width="1.2" fill="none"/></svg>
<svg class="a" style="left:189.5px;top:566.8px;" width="10" height="10" viewBox="0 0 10 10"><circle cx="2" cy="5" r="1.2" fill="#eee"/><path d="M3 5 H5 L6 2 L7 8 L8 5 H10" stroke="#c8ccd3" stroke-width=".7" fill="none"/></svg>
<div class="a" style="left:189px;top:579.5px;width:11px;height:1px;background:#9aa0aa;"></div>
<svg class="a" style="left:189.5px;top:581.5px;" width="10" height="10" viewBox="0 0 10 10"><path d="M.5 3 V9 M9.5 3 V9 M.5 7 H9.5" stroke="#c8ccd3" stroke-width=".6"/><path d="M3 7 L8 2" stroke="#f2b43c" stroke-width="1.4"/><path d="M7 3 L9 1" stroke="#e44" stroke-width="1.4"/></svg>
<svg class="a" style="left:189.5px;top:592.7px;" width="10" height="10" viewBox="0 0 10 10"><path d="M.5 3 V9 M9.5 3 V9 M.5 7 H9.5" stroke="#c8ccd3" stroke-width=".6"/><text x="5" y="6" font-size="6" text-anchor="middle" fill="#eee" font-family="Liberation Sans">A</text></svg>
<svg class="a" style="left:189.5px;top:605.3px;" width="10" height="10" viewBox="0 0 10 10"><path d="M.5 1 V9 M9.5 1 V9 M.5 1.5 H9.5" stroke="#c8ccd3" stroke-width=".6"/><circle cx="5" cy="5.5" r="2.5" stroke="#3ec46d" stroke-width="1.1" fill="none"/></svg>
<div class="a" style="left:189px;top:618.7px;width:11px;height:1px;background:#9aa0aa;"></div>
<svg class="a" style="left:189.5px;top:620.7px;" width="10" height="10" viewBox="0 0 10 10"><path d="M.5 3 V9 M9.5 3 V9 M.5 7 H9.5" stroke="#c8ccd3" stroke-width=".6"/><path d="M3 7 L8 2" stroke="#f2b43c" stroke-width="1.2"/></svg>
<svg class="a" style="left:189.5px;top:637.0px;" width="10" height="10" viewBox="0 0 10 10"><path d="M2 9 Q0 6 1 5 L2.5 6 V1.5 Q3.5 1 4 2 V0.8 Q5 0.3 5.5 1 V1.5 Q6.5 1 7 2 V3 Q8 2.5 8.5 3.5 V7 Q8 9.5 6 10Z" fill="#eceef1"/></svg>
<svg class="a" style="left:189.5px;top:650.0px;" width="10" height="10" viewBox="0 0 10 10"><circle cx="4.2" cy="4.2" r="3.5" stroke="#e8eaee" stroke-width="1" fill="none"/><path d="M6.8 6.8 L9.5 9.5" stroke="#f2b43c" stroke-width="1.3"/></svg>
<svg class="a" style="left:189.5px;top:662.0px;" width="10" height="10" viewBox="0 0 10 10"><ellipse cx="4.5" cy="5" rx="4" ry="2.5" stroke="#e8eaee" stroke-width=".8" fill="none"/><path d="M4 0 L8 4 L4 6Z" fill="#e8eaee"/><path d="M3 5 H6" stroke="#5bb4ec"/><path d="M7 9 L10 6 V9Z" fill="#eee"/></svg>
<svg class="a" style="left:189.5px;top:674.0px;" width="10" height="10" viewBox="0 0 10 10"><rect x="0" y="2" width="8" height="6" rx="1" fill="#eceef1"/><circle cx="4" cy="5" r="1.6" fill="#3b4453"/><path d="M7 7 Q9 8 9 10" stroke="#5bb4ec" stroke-width="1.2" fill="none"/></svg>
<svg class="a" style="left:189.5px;top:686.5px;" width="10" height="10" viewBox="0 0 10 10"><ellipse cx="3" cy="3" rx="1.6" ry="3" fill="#eceef1"/><ellipse cx="7" cy="4.5" rx="1.6" ry="3" fill="#eceef1"/><rect x="2" y="7" width="2" height="2" fill="#eceef1"/><rect x="6" y="8.5" width="2" height="1.5" fill="#eceef1"/></svg>
<div class="a" style="left:203px;top:109px;width:906px;height:653px;background:#8a8a8a;"></div>
<svg class="a" style="left:203px;top:109px;overflow:hidden;will-change:transform" width="906" height="653" viewBox="203 109 906 653"><defs><filter id="blur" x="-5%" y="-5%" width="110%" height="110%"><feGaussianBlur stdDeviation="1.2"/></filter></defs><rect x="243" y="199.5" width="778" height="550" fill="#7a7a7a" opacity=".55" filter="url(#blur)"/><rect x="245" y="201.3" width="773" height="547" fill="#fefefe"/><rect x="250.5" y="206.5" width="762.0" height="536.0" fill="none" stroke="#d6d6d6" stroke-width="1" stroke-dasharray="1.2 1.2"/><rect x="281.5" y="210.5" width="212.0" height="149.0" fill="none" stroke="#d2d2d2" stroke-width="1"/><rect x="493.5" y="210.5" width="163.0" height="152.0" fill="none" stroke="#d2d2d2" stroke-width="1"/><rect x="281.5" y="359.5" width="212.0" height="176.0" fill="none" stroke="#d2d2d2" stroke-width="1"/><rect x="493.5" y="362.5" width="163.0" height="173.0" fill="none" stroke="#d2d2d2" stroke-width="1"/><rect x="399.5" y="535.5" width="199.0" height="171.0" fill="none" stroke="#d2d2d2" stroke-width="1"/><path d="M357.60,256.50 L467.50,256.50" stroke="#222" stroke-width="0.7" fill="none" /><path d="M358.50,254.50 L358.50,268.30" stroke="#222" stroke-width="0.7" fill="none" /><path d="M356.90000000000003,257.7 L359.7,254.9" stroke="#111" stroke-width="1.25"/><path d="M356.90000000000003,269.7 L359.7,266.90000000000003" stroke="#111" stroke-width="1.25"/><path d="M460.3,257.7 L463.09999999999997,254.9" stroke="#111" stroke-width="1.25"/><path d="M466.1,257.7 L468.9,254.9" stroke="#111" stroke-width="1.25"/><text x="356.6" y="262" font-size="3.4" fill="#111" stroke="#111" stroke-width=".18" text-anchor="middle" font-family="Liberation Sans" transform="rotate(-90 356.6 262)" >150</text><path d="M461.50,256.30 L461.50,318.60" stroke="#222" stroke-width="0.7" fill="none" /><path d="M467.50,254.50 L467.50,320.00" stroke="#222" stroke-width="0.7" fill="none" /><path d="M460.3,292.4 L463.09999999999997,289.6" stroke="#111" stroke-width="1.25"/><path d="M460.3,320.0 L463.09999999999997,317.20000000000005" stroke="#111" stroke-width="1.25"/><path d="M466.1,320.0 L468.9,317.20000000000005" stroke="#111" stroke-width="1.25"/><text x="460.6" y="273.5" font-size="3.4" fill="#111" stroke="#111" stroke-width=".18" text-anchor="middle" font-family="Liberation Sans" transform="rotate(-90 460.6 273.5)" >785</text><text x="460.6" y="304.5" font-size="3.4" fill="#111" stroke="#111" stroke-width=".18" text-anchor="middle" font-family="Liberation Sans" transform="rotate(-90 460.6 304.5)" >365</text><text x="466.4" y="286" font-size="3.4" fill="#111" stroke="#111" stroke-width=".18" text-anchor="middle" font-family="Liberation Sans" transform="rotate(-90 466.4 286)" >1150</text><path d="M359.00,268.50 L366.00,268.50" stroke="#999" stroke-width="0.6" fill="none" /><rect x="381.5" y="267.6" width="1.3000000000000114" height="1.3" fill="#333"/><rect x="387.3" y="267.6" width="3.1999999999999886" height="1.3" fill="#333"/><rect x="394.2" y="267.6" width="1.3000000000000114" height="1.3" fill="#333"/><rect x="411" y="267.6" width="1.1999999999999886" height="1.3" fill="#333"/><rect x="369.8" y="263.5" width="10.6" height="10" fill="#b0b0b0"/><rect x="373.04" y="264.92" width=".7" height=".7" fill="#222"/><rect x="376.31" y="264.18" width=".7" height=".7" fill="#222"/><rect x="375.16" y="266.94" width=".7" height=".7" fill="#222"/><rect x="370.38" y="268.27" width=".7" height=".7" fill="#222"/><rect x="370.17" y="267.58" width=".7" height=".7" fill="#222"/><rect x="370.50" y="264.35" width=".7" height=".7" fill="#222"/><rect x="374.05" y="271.27" width=".7" height=".7" fill="#222"/><rect x="371.04" y="265.60" width=".7" height=".7" fill="#222"/><rect x="376.07" y="272.41" width=".7" height=".7" fill="#222"/><rect x="375.57" y="267.23" width=".7" height=".7" fill="#222"/><rect x="379.56" y="263.94" width=".7" height=".7" fill="#222"/><rect x="378.38" y="266.22" width=".7" height=".7" fill="#222"/><rect x="371.24" y="264.61" width=".7" height=".7" fill="#222"/><rect x="372.88" y="271.17" width=".7" height=".7" fill="#222"/><rect x="371.61" y="268.97" width=".7" height=".7" fill="#222"/><rect x="376.19" y="267.00" width=".7" height=".7" fill="#222"/><rect x="375.28" y="264.09" width=".7" height=".7" fill="#222"/><rect x="370.40" y="265.44" width=".7" height=".7" fill="#222"/><rect x="376.60" y="267.52" width=".7" height=".7" fill="#222"/><rect x="372.94" y="269.00" width=".7" height=".7" fill="#222"/><rect x="374.33" y="266.32" width=".7" height=".7" fill="#222"/><rect x="377.74" y="270.07" width=".7" height=".7" fill="#222"/><rect x="372.24" y="268.90" width=".7" height=".7" fill="#222"/><rect x="375.05" y="271.73" width=".7" height=".7" fill="#222"/><rect x="377.09" y="266.21" width=".7" height=".7" fill="#222"/><rect x="379.60" y="264.61" width=".7" height=".7" fill="#222"/><rect x="373.98" y="270.62" width=".7" height=".7" fill="#222"/><rect x="371.32" y="268.10" width=".7" height=".7" fill="#222"/><rect x="370.19" y="269.78" width=".7" height=".7" fill="#222"/><rect x="377.45" y="268.89" width=".7" height=".7" fill="#222"/><rect x="378.55" y="266.45" width=".7" height=".7" fill="#222"/><rect x="376.75" y="269.09" width=".7" height=".7" fill="#222"/><rect x="375.60" y="267.79" width=".7" height=".7" fill="#222"/><rect x="378.20" y="272.38" width=".7" height=".7" fill="#222"/><rect x="374.54" y="269.74" width=".7" height=".7" fill="#222"/><rect x="370.41" y="270.09" width=".7" height=".7" fill="#222"/><rect x="376.27" y="272.84" width=".7" height=".7" fill="#222"/><rect x="378.02" y="266.18" width=".7" height=".7" fill="#222"/><rect x="373.66" y="269.79" width=".7" height=".7" fill="#222"/><rect x="370.03" y="267.84" width=".7" height=".7" fill="#222"/><rect x="371.48" y="264.60" width=".7" height=".7" fill="#222"/><rect x="370.39" y="270.72" width=".7" height=".7" fill="#222"/><rect x="371.09" y="265.83" width=".7" height=".7" fill="#222"/><rect x="373.71" y="271.69" width=".7" height=".7" fill="#222"/><rect x="370.61" y="267.72" width=".7" height=".7" fill="#222"/><rect x="375.29" y="271.80" width=".7" height=".7" fill="#222"/><rect x="377.99" y="271.62" width=".7" height=".7" fill="#222"/><rect x="372.58" y="267.40" width=".7" height=".7" fill="#222"/><rect x="373.39" y="271.81" width=".7" height=".7" fill="#222"/><rect x="379.38" y="264.92" width=".7" height=".7" fill="#222"/><rect x="371.56" y="265.68" width=".7" height=".7" fill="#222"/><rect x="372.13" y="268.06" width=".7" height=".7" fill="#222"/><rect x="375.69" y="265.97" width=".7" height=".7" fill="#222"/><rect x="369.84" y="267.44" width=".7" height=".7" fill="#222"/><rect x="373.49" y="268.82" width=".7" height=".7" fill="#222"/><rect x="379.33" y="269.99" width=".8" height=".8" fill="#fff"/><rect x="374.95" y="269.31" width=".8" height=".8" fill="#fff"/><rect x="376.56" y="264.01" width=".8" height=".8" fill="#fff"/><rect x="378.80" y="270.83" width=".8" height=".8" fill="#fff"/><rect x="378.55" y="271.00" width=".8" height=".8" fill="#fff"/><rect x="373.72" y="267.25" width=".8" height=".8" fill="#fff"/><rect x="370.84" y="269.46" width=".8" height=".8" fill="#fff"/><rect x="370.42" y="264.13" width=".8" height=".8" fill="#fff"/><rect x="371.89" y="265.03" width=".8" height=".8" fill="#fff"/><rect x="373.20" y="263.99" width=".8" height=".8" fill="#fff"/><rect x="369.80" y="264.92" width=".8" height=".8" fill="#fff"/><rect x="370.81" y="266.92" width=".8" height=".8" fill="#fff"/><rect x="370.06" y="271.72" width=".8" height=".8" fill="#fff"/><rect x="375.94" y="264.90" width=".8" height=".8" fill="#fff"/><rect x="372.32" y="266.77" width=".8" height=".8" fill="#fff"/><rect x="373.44" y="264.65" width=".8" height=".8" fill="#fff"/><rect x="378.29" y="272.84" width=".8" height=".8" fill="#fff"/><rect x="374.46" y="268.05" width=".8" height=".8" fill="#fff"/><rect x="370.66" y="264.46" width=".8" height=".8" fill="#fff"/><rect x="373.23" y="265.99" width=".8" height=".8" fill="#fff"/><rect x="378.09" y="265.02" width=".8" height=".8" fill="#fff"/><rect x="370.03" y="272.44" width=".8" height=".8" fill="#fff"/><rect x="375.08" y="264.88" width=".8" height=".8" fill="#fff"/><rect x="375.23" y="263.75" width=".8" height=".8" fill="#fff"/><rect x="375.08" y="272.70" width=".8" height=".8" fill="#fff"/><rect x="371.3" y="263.6" width="5" height=".9" fill="#444"/><rect x="369.8" y="267" width="10.6" height="2.6" fill="#1a1a1a"/><rect x="396.3" y="263.5" width="10.6" height="10" fill="#b0b0b0"/><rect x="404.93" y="270.04" width=".7" height=".7" fill="#222"/><rect x="398.91" y="266.95" width=".7" height=".7" fill="#222"/><rect x="397.97" y="270.76" width=".7" height=".7" fill="#222"/><rect x="401.63" y="270.82" width=".7" height=".7" fill="#222"/><rect x="399.60" y="265.60" width=".7" height=".7" fill="#222"/><rect x="404.42" y="272.76" width=".7" height=".7" fill="#222"/><rect x="404.83" y="271.08" width=".7" height=".7" fill="#222"/><rect x="404.48" y="270.45" width=".7" height=".7" fill="#222"/><rect x="398.57" y="268.37" width=".7" height=".7" fill="#222"/><rect x="399.86" y="263.77" width=".7" height=".7" fill="#222"/><rect x="396.58" y="266.13" width=".7" height=".7" fill="#222"/><rect x="398.89" y="270.01" width=".7" height=".7" fill="#222"/><rect x="405.87" y="267.70" width=".7" height=".7" fill="#222"/><rect x="405.67" y="272.79" width=".7" height=".7" fill="#222"/><rect x="405.85" y="266.93" width=".7" height=".7" fill="#222"/><rect x="398.50" y="265.63" width=".7" height=".7" fill="#222"/><rect x="398.27" y="265.42" width=".7" height=".7" fill="#222"/><rect x="402.54" y="271.96" width=".7" height=".7" fill="#222"/><rect x="404.70" y="268.01" width=".7" height=".7" fill="#222"/><rect x="402.83" y="271.02" width=".7" height=".7" fill="#222"/><rect x="397.15" y="269.71" width=".7" height=".7" fill="#222"/><rect x="405.40" y="270.85" width=".7" height=".7" fill="#222"/><rect x="403.80" y="267.99" width=".7" height=".7" fill="#222"/><rect x="398.09" y="270.92" width=".7" height=".7" fill="#222"/><rect x="399.63" y="271.03" width=".7" height=".7" fill="#222"/><rect x="406.02" y="267.22" width=".7" height=".7" fill="#222"/><rect x="400.31" y="272.40" width=".7" height=".7" fill="#222"/><rect x="403.55" y="265.10" width=".7" height=".7" fill="#222"/><rect x="397.57" y="264.92" width=".7" height=".7" fill="#222"/><rect x="405.35" y="271.08" width=".7" height=".7" fill="#222"/><rect x="397.76" y="271.27" width=".7" height=".7" fill="#222"/><rect x="406.10" y="269.68" width=".7" height=".7" fill="#222"/><rect x="399.80" y="268.66" width=".7" height=".7" fill="#222"/><rect x="397.61" y="263.63" width=".7" height=".7" fill="#222"/><rect x="406.01" y="269.61" width=".7" height=".7" fill="#222"/><rect x="401.57" y="272.28" width=".7" height=".7" fill="#222"/><rect x="400.64" y="271.69" width=".7" height=".7" fill="#222"/><rect x="404.56" y="265.48" width=".7" height=".7" fill="#222"/><rect x="398.82" y="266.25" width=".7" height=".7" fill="#222"/><rect x="398.71" y="269.01" width=".7" height=".7" fill="#222"/><rect x="398.89" y="267.44" width=".7" height=".7" fill="#222"/><rect x="397.61" y="272.05" width=".7" height=".7" fill="#222"/><rect x="399.84" y="267.81" width=".7" height=".7" fill="#222"/><rect x="402.13" y="272.00" width=".7" height=".7" fill="#222"/><rect x="400.51" y="272.13" width=".7" height=".7" fill="#222"/><rect x="401.32" y="268.50" width=".7" height=".7" fill="#222"/><rect x="401.54" y="263.68" width=".7" height=".7" fill="#222"/><rect x="400.70" y="265.22" width=".7" height=".7" fill="#222"/><rect x="396.34" y="271.01" width=".7" height=".7" fill="#222"/><rect x="398.02" y="267.95" width=".7" height=".7" fill="#222"/><rect x="403.55" y="268.73" width=".7" height=".7" fill="#222"/><rect x="399.56" y="268.37" width=".7" height=".7" fill="#222"/><rect x="401.85" y="270.87" width=".7" height=".7" fill="#222"/><rect x="397.36" y="268.77" width=".7" height=".7" fill="#222"/><rect x="398.78" y="266.10" width=".7" height=".7" fill="#222"/><rect x="404.02" y="268.27" width=".8" height=".8" fill="#fff"/><rect x="401.92" y="270.64" width=".8" height=".8" fill="#fff"/><rect x="405.42" y="267.67" width=".8" height=".8" fill="#fff"/><rect x="402.43" y="268.25" width=".8" height=".8" fill="#fff"/><rect x="401.42" y="270.01" width=".8" height=".8" fill="#fff"/><rect x="400.82" y="268.51" width=".8" height=".8" fill="#fff"/><rect x="401.08" y="272.35" width=".8" height=".8" fill="#fff"/><rect x="403.29" y="271.74" width=".8" height=".8" fill="#fff"/><rect x="405.72" y="265.94" width=".8" height=".8" fill="#fff"/><rect x="401.90" y="272.37" width=".8" height=".8" fill="#fff"/><rect x="404.70" y="264.79" width=".8" height=".8" fill="#fff"/><rect x="397.52" y="267.66" width=".8" height=".8" fill="#fff"/><rect x="397.03" y="265.76" width=".8" height=".8" fill="#fff"/><rect x="397.03" y="269.79" width=".8" height=".8" fill="#fff"/><rect x="404.14" y="271.93" width=".8" height=".8" fill="#fff"/><rect x="397.84" y="270.23" width=".8" height=".8" fill="#fff"/><rect x="402.90" y="264.84" width=".8" height=".8" fill="#fff"/><rect x="405.13" y="272.59" width=".8" height=".8" fill="#fff"/><rect x="398.50" y="272.45" width=".8" height=".8" fill="#fff"/><rect x="400.28" y="268.08" width=".8" height=".8" fill="#fff"/><rect x="406.20" y="271.32" width=".8" height=".8" fill="#fff"/><rect x="397.91" y="267.56" width=".8" height=".8" fill="#fff"/><rect x="401.46" y="266.69" width=".8" height=".8" fill="#fff"/><rect x="398.26" y="266.49" width=".8" height=".8" fill="#fff"/><rect x="403.52" y="263.68" width=".8" height=".8" fill="#fff"/><rect x="397.8" y="263.6" width="5" height=".9" fill="#444"/><path d="M394.60,290.50 L462.00,290.50" stroke="#222" stroke-width="0.7" fill="none" /><path d="M319.50,318.50 L353.20,318.50 L380.50,291.30" stroke="#222" stroke-width="0.6" fill="none" /><path d="M319.50,320.50 L354.00,320.50 L381.50,292.80" stroke="#222" stroke-width="0.6" fill="none" /><path d="M353.50,319.50 L381.00,292.00" stroke="#777" stroke-width="0.5" fill="none" /><path d="M317.20,323.50 L354.50,323.50 L380.00,297.50" stroke="#3550ff" stroke-width="0.7" fill="none" stroke-dasharray="4 1.2 0.8 1.2"/><path d="M319.50,326.50 L356.50,326.50 L388.60,294.00" stroke="#222" stroke-width="1.0" fill="none" /><path d="M349.50,320.40 L349.50,326.00" stroke="#222" stroke-width="0.6" fill="none" /><path d="M319.50,311.20 L319.50,341.50" stroke="#222" stroke-width="0.7" fill="none" /><path d="M323.50,311.20 L323.50,323.50" stroke="#222" stroke-width="0.7" fill="none" /><path d="M333.50,311.20 L333.50,323.50" stroke="#222" stroke-width="0.7" fill="none" /><circle cx="323.8" cy="323.1" r=".9" fill="#111"/><circle cx="333.9" cy="323.1" r=".9" fill="#111"/><path d="M319.50,311.50 L335.00,311.50" stroke="#222" stroke-width="0.5" fill="none" /><path d="M318.1,312.59999999999997 L320.9,309.8" stroke="#111" stroke-width="1.25"/><path d="M322.40000000000003,312.59999999999997 L325.2,309.8" stroke="#111" stroke-width="1.25"/><path d="M332.5,312.59999999999997 L335.29999999999995,309.8" stroke="#111" stroke-width="1.25"/><text x="321.6" y="310.3" font-size="2.2" fill="#111" stroke="#111" stroke-width=".18" text-anchor="middle" font-family="Liberation Sans" >90</text><text x="328.9" y="309.5" font-size="2.0" fill="#111" stroke="#111" stroke-width=".18" text-anchor="middle" font-family="Liberation Sans" >1150</text><path d="M382.1 292.5 V287.3 H387.2 V294.3 M389.3 294.3 V287.3 H394.6 V290.8" stroke="#222" stroke-width="0.7" fill="none" /><path d="M389.30,294.30 L420.20,325.90" stroke="#222" stroke-width="1.0" fill="none" /><path d="M394.60,290.80 L423.00,319.50" stroke="#222" stroke-width="0.6" fill="none" /><path d="M396.50,291.00 L423.50,318.30" stroke="#222" stroke-width="0.6" fill="none" /><path d="M398.00,290.80 L424.30,317.60" stroke="#777" stroke-width="0.5" fill="none" /><path d="M395.50,297.30 L397.80,295.20" stroke="#222" stroke-width="0.5" fill="none" /><path d="M420.20,325.50 L457.20,325.50" stroke="#222" stroke-width="1.0" fill="none" /><path d="M423.00,319.50 L427.50,319.50 L427.50,325.90" stroke="#222" stroke-width="0.6" fill="none" /><path d="M427.50,318.50 L457.20,318.50" stroke="#222" stroke-width="0.6" fill="none" /><path d="M457.50,318.60 L457.50,341.50" stroke="#222" stroke-width="0.7" fill="none" /><rect x="423.9" y="308.4" width="31" height="9.8" fill="#858585" stroke="#111" stroke-width="1.1"/><path d="M425.5 310.5 Q428 309.8 430 311 T435 311 T440 310.5 T445 311 T450 310.5 T453.5 311 M425.5 313.3 Q428 312.5 430 313.8 T435 313.5 T440 313.3 T445 313.8 T450 313.3 T453.5 313.5 M425.5 316.2 Q428 315.5 430 316.5 T435 316.2 T440 316.3 T445 316.5 T450 316.2 T453.5 316.5" stroke="#e8e8e8" stroke-width=".7" fill="none" stroke-dasharray="2.5 .8"/><path d="M427 309.5 L429 317 M434 309.5 L436 317 M441 309.5 L443 317 M448 309.5 L450 317" stroke="#333" stroke-width=".5"/><circle cx="442.7" cy="323" r="1" fill="#222"/><circle cx="453" cy="323" r="1" fill="#222"/><path d="M411.7 316.6 Q407.5 320 407.6 326.3" stroke="#222" stroke-width="0.6" fill="none" /><path d="M407.60,326.50 L420.20,326.50" stroke="#555" stroke-width="0.5" fill="none" /><path d="M410.3,318.0 L413.09999999999997,315.20000000000005" stroke="#111" stroke-width="0.8"/><path d="M406.20000000000005,327.7 L409.0,324.90000000000003" stroke="#111" stroke-width="0.8"/><text x="407.3" y="322.3" font-size="2.6" fill="#111" stroke="#111" stroke-width=".18" text-anchor="middle" font-family="Liberation Sans" transform="rotate(-80 407.3 322.3)" >45°</text><path d="M356.50,326.00 L356.50,336.10" stroke="#222" stroke-width="0.7" fill="none" /><path d="M420.50,326.00 L420.50,336.10" stroke="#222" stroke-width="0.7" fill="none" /><path d="M319.50,336.50 L457.20,336.50" stroke="#222" stroke-width="0.7" fill="none" /><path d="M319.50,341.50 L457.20,341.50" stroke="#222" stroke-width="0.7" fill="none" /><path d="M318.1,337.5 L320.9,334.70000000000005" stroke="#111" stroke-width="1.25"/><path d="M355.1,337.5 L357.9,334.70000000000005" stroke="#111" stroke-width="1.25"/><path d="M418.8,337.5 L421.59999999999997,334.70000000000005" stroke="#111" stroke-width="1.25"/><path d="M455.8,337.5 L458.59999999999997,334.70000000000005" stroke="#111" stroke-width="1.25"/><path d="M318.1,342.9 L320.9,340.1" stroke="#111" stroke-width="1.25"/><path d="M455.8,342.9 L458.59999999999997,340.1" stroke="#111" stroke-width="1.25"/><text x="344.2" y="335.7" font-size="4.1" fill="#111" stroke="#111" stroke-width=".18" text-anchor="middle" font-family="Liberation Sans" textLength="6.8" lengthAdjust="spacingAndGlyphs">800</text><text x="388.5" y="335.7" font-size="4.1" fill="#111" stroke="#111" stroke-width=".18" text-anchor="middle" font-family="Liberation Sans" textLength="9" lengthAdjust="spacingAndGlyphs">1400</text><text x="439.5" y="335.7" font-size="4.1" fill="#111" stroke="#111" stroke-width=".18" text-anchor="middle" font-family="Liberation Sans" textLength="6.8" lengthAdjust="spacingAndGlyphs">800</text><text x="388.5" y="341.1" font-size="4.1" fill="#111" stroke="#111" stroke-width=".18" text-anchor="middle" font-family="Liberation Sans" textLength="9" lengthAdjust="spacingAndGlyphs">3000</text><path d="M506.60,225.50 L632.40,225.50" stroke="#222" stroke-width="0.7" fill="none" /><text x="569.5" y="224.8" font-size="3.6" fill="#111" stroke="#111" stroke-width=".18" text-anchor="middle" font-family="Liberation Sans" textLength="8" lengthAdjust="spacingAndGlyphs">2700</text><path d="M506.60,236.50 L632.40,236.50" stroke="#222" stroke-width="0.7" fill="none" /><text x="518" y="235.4" font-size="3.4" fill="#111" stroke="#111" stroke-width=".18" text-anchor="middle" font-family="Liberation Sans" textLength="5.699999999999999" lengthAdjust="spacingAndGlyphs">460</text><text x="532.5" y="235.4" font-size="3.4" fill="#111" stroke="#111" stroke-width=".18" text-anchor="middle" font-family="Liberation Sans" textLength="5.699999999999999" lengthAdjust="spacingAndGlyphs">185</text><text x="569.5" y="235.4" font-size="3.4" fill="#111" stroke="#111" stroke-width=".18" text-anchor="middle" font-family="Liberation Sans" textLength="7.6" lengthAdjust="spacingAndGlyphs">1410</text><text x="606" y="235.4" font-size="3.4" fill="#111" stroke="#111" stroke-width=".18" text-anchor="middle" font-family="Liberation Sans" textLength="5.699999999999999" lengthAdjust="spacingAndGlyphs">185</text><text x="621.5" y="235.4" font-size="3.4" fill="#111" stroke="#111" stroke-width=".18" text-anchor="middle" font-family="Liberation Sans" textLength="5.699999999999999" lengthAdjust="spacingAndGlyphs">460</text><path d="M505.20000000000005,226.9 L508.0,224.1" stroke="#111" stroke-width="1.25"/><path d="M505.20000000000005,237.5 L508.0,234.7" stroke="#111" stroke-width="1.25"/><path d="M631.0,226.9 L633.8,224.1" stroke="#111" stroke-width="1.25"/><path d="M631.0,237.5 L633.8,234.7" stroke="#111" stroke-width="1.25"/><path d="M506.50,224.00 L506.50,264.20" stroke="#222" stroke-width="0.7" fill="none" /><path d="M632.50,224.00 L632.50,261.20" stroke="#222" stroke-width="0.7" fill="none" /><path d="M528.50,235.00 L528.50,269.00" stroke="#222" stroke-width="0.7" fill="none" /><path d="M527.1,237.5 L529.9,234.7" stroke="#111" stroke-width="1.25"/><path d="M536.50,235.00 L536.50,269.00" stroke="#222" stroke-width="0.7" fill="none" /><path d="M535.1,237.5 L537.9,234.7" stroke="#111" stroke-width="1.25"/><path d="M602.50,235.00 L602.50,269.00" stroke="#222" stroke-width="0.7" fill="none" /><path d="M600.6,237.5 L603.4,234.7" stroke="#111" stroke-width="1.25"/><path d="M610.50,235.00 L610.50,269.00" stroke="#222" stroke-width="0.7" fill="none" /><path d="M609.1,237.5 L611.9,234.7" stroke="#111" stroke-width="1.25"/><rect x="530.3" y="274.4" width="5.9" height="35.1" fill="#d8d8d8"/><path d="M529.50,257.00 L529.50,328.60" stroke="#222" stroke-width="0.6" fill="none" /><path d="M537.50,257.00 L537.50,328.60" stroke="#222" stroke-width="0.6" fill="none" /><path d="M531.50,257.00 L531.50,328.60" stroke="#777" stroke-width="0.5" fill="none" /><path d="M535.50,257.00 L535.50,328.60" stroke="#777" stroke-width="0.5" fill="none" /><path d="M529.30,257.50 L537.20,257.50" stroke="#222" stroke-width="0.6" fill="none" /><path d="M529.30,290.50 L537.20,290.50" stroke="#888" stroke-width="0.4" fill="none" /><rect x="528.5" y="320.5" width="10.0" height="8.0" fill="none" stroke="#222" stroke-width=".8"/><rect x="528.5" y="258.5" width="10.0" height="5.0" fill="none" stroke="#555" stroke-width=".6"/><rect x="603" y="274.4" width="5.9" height="35.1" fill="#d8d8d8"/><path d="M602.50,257.00 L602.50,328.60" stroke="#222" stroke-width="0.6" fill="none" /><path d="M609.50,257.00 L609.50,328.60" stroke="#222" stroke-width="0.6" fill="none" /><path d="M604.50,257.00 L604.50,328.60" stroke="#777" stroke-width="0.5" fill="none" /><path d="M607.50,257.00 L607.50,328.60" stroke="#777" stroke-width="0.5" fill="none" /><path d="M602.00,257.50 L609.90,257.50" stroke="#222" stroke-width="0.6" fill="none" /><path d="M602.00,290.50 L609.90,290.50" stroke="#888" stroke-width="0.4" fill="none" /><rect x="601.5" y="320.5" width="9.0" height="8.0" fill="none" stroke="#222" stroke-width=".8"/><rect x="601.5" y="258.5" width="9.0" height="5.0" fill="none" stroke="#555" stroke-width=".6"/><rect x="507.5" y="264.5" width="108.0" height="10.0" fill="none" stroke="#222" stroke-width=".6"/><rect x="507.5" y="309.5" width="125.0" height="11.0" fill="none" stroke="#222" stroke-width=".6"/><path d="M532.50,253.00 L532.50,328.60" stroke="#3550ff" stroke-width="0.7" fill="none" stroke-dasharray="4 1.2 0.8 1.2"/><path d="M569.50,253.00 L569.50,328.60" stroke="#3550ff" stroke-width="0.7" fill="none" stroke-dasharray="4 1.2 0.8 1.2"/><path d="M606.50,253.00 L606.50,328.60" stroke="#3550ff" stroke-width="0.7" fill="none" stroke-dasharray="4 1.2 0.8 1.2"/><rect x="615" y="261.2" width="17" height="16.8" fill="#000"/><circle cx="623.5" cy="269.6" r="6.4" fill="#fff"/><rect x="616.5" y="268.3" width="14" height="2.7" fill="#000"/><path d="M532.50,330.00 L532.50,340.00" stroke="#222" stroke-width="0.6" fill="none" /><path d="M606.50,330.00 L606.50,340.00" stroke="#222" stroke-width="0.6" fill="none" /><path d="M532.50,339.50 L606.50,339.50" stroke="#222" stroke-width="0.7" fill="none" /><path d="M531.1,340.59999999999997 L533.9,337.8" stroke="#111" stroke-width="1.25"/><path d="M605.1,340.59999999999997 L607.9,337.8" stroke="#111" stroke-width="1.25"/><text x="569.5" y="338.5" font-size="3.6" fill="#111" stroke="#111" stroke-width=".18" text-anchor="middle" font-family="Liberation Sans" textLength="8" lengthAdjust="spacingAndGlyphs">1520</text><rect x="369.5" y="371.5" width="10.0" height="123.0" rx=".8" fill="none" stroke="#222" stroke-width=".75"/><rect x="395.5" y="371.5" width="10.0" height="123.0" rx=".8" fill="none" stroke="#222" stroke-width=".75"/><rect x="422.5" y="371.5" width="30.0" height="123.0" rx=".8" fill="none" stroke="#222" stroke-width=".75"/><path d="M432.50,371.70 L432.50,494.50" stroke="#222" stroke-width="0.75" fill="none" /><path d="M442.50,371.70 L442.50,494.50" stroke="#222" stroke-width="0.75" fill="none" /><rect x="319.5" y="394.5" width="50.0" height="5.0" fill="none" stroke="#444" stroke-width=".5"/><path d="M319.30,396.50 L352.00,396.50" stroke="#888" stroke-width="0.4" fill="none" /><path d="M352.50,394.90 L352.50,399.70" stroke="#222" stroke-width="0.6" fill="none" /><path d="M379.50,394.50 L395.20,394.50" stroke="#222" stroke-width="0.6" fill="none" /><path d="M379.50,399.50 L395.20,399.50" stroke="#222" stroke-width="0.6" fill="none" /><path d="M405.60,394.50 L422.30,394.50" stroke="#222" stroke-width="0.6" fill="none" /><path d="M405.60,399.50 L422.30,399.50" stroke="#222" stroke-width="0.6" fill="none" /><rect x="369.5" y="393.5" width="10.0" height="8.0" fill="none" stroke="#222" stroke-width=".6"/><circle cx="387.5" cy="397.3" r="1.8" fill="none" stroke="#222" stroke-width=".6"/><path d="M383.00,395.50 L392.00,395.50" stroke="#222" stroke-width="0.8" fill="none" /><path d="M383.00,398.50 L392.00,398.50" stroke="#222" stroke-width="0.8" fill="none" /><path d="M419.00,393.50 L455.00,393.50" stroke="#222" stroke-width="0.8" fill="none" /><rect x="453.5" y="394.5" width="2.0" height="5.0" fill="none" stroke="#222" stroke-width=".5"/><rect x="319.5" y="466.5" width="50.0" height="5.0" fill="none" stroke="#444" stroke-width=".5"/><path d="M319.30,467.50 L352.00,467.50" stroke="#888" stroke-width="0.4" fill="none" /><path d="M352.50,466.60 L352.50,471.40" stroke="#222" stroke-width="0.6" fill="none" /><path d="M379.50,466.50 L395.20,466.50" stroke="#222" stroke-width="0.6" fill="none" /><path d="M379.50,471.50 L395.20,471.50" stroke="#222" stroke-width="0.6" fill="none" /><path d="M405.60,466.50 L422.30,466.50" stroke="#222" stroke-width="0.6" fill="none" /><path d="M405.60,471.50 L422.30,471.50" stroke="#222" stroke-width="0.6" fill="none" /><rect x="369.5" y="465.5" width="10.0" height="8.0" fill="none" stroke="#222" stroke-width=".6"/><circle cx="387.5" cy="469" r="1.8" fill="none" stroke="#222" stroke-width=".6"/><path d="M383.00,467.50 L392.00,467.50" stroke="#222" stroke-width="0.8" fill="none" /><path d="M383.00,470.50 L392.00,470.50" stroke="#222" stroke-width="0.8" fill="none" /><path d="M419.00,473.50 L455.00,473.50" stroke="#222" stroke-width="0.8" fill="none" /><rect x="453.5" y="466.5" width="2.0" height="5.0" fill="none" stroke="#222" stroke-width=".5"/><path d="M319.00,397.50 L465.00,397.50" stroke="#3550ff" stroke-width="0.6" fill="none" stroke-dasharray="4 1.2 0.8 1.2"/><path d="M310.00,433.50 L465.00,433.50" stroke="#3550ff" stroke-width="0.6" fill="none" stroke-dasharray="4 1.2 0.8 1.2"/><path d="M319.00,469.50 L465.00,469.50" stroke="#3550ff" stroke-width="0.6" fill="none" stroke-dasharray="4 1.2 0.8 1.2"/><path d="M302.50,397.30 L302.50,469.00" stroke="#222" stroke-width="0.8" fill="none" /><path d="M302.00,397.50 L319.00,397.50" stroke="#222" stroke-width="0.6" fill="none" /><path d="M302.00,469.50 L319.00,469.50" stroke="#222" stroke-width="0.6" fill="none" /><path d="M300.6,398.7 L303.4,395.90000000000003" stroke="#111" stroke-width="1.25"/><path d="M300.6,470.4 L303.4,467.6" stroke="#111" stroke-width="1.25"/><text x="300.8" y="433" font-size="3.4" fill="#111" stroke="#111" stroke-width=".18" text-anchor="middle" font-family="Liberation Sans" transform="rotate(-90 300.8 433)" textLength="8" lengthAdjust="spacingAndGlyphs">1520</text><rect x="524.9" y="457.3" width="1.2" height="1" fill="#333"/><rect x="558.4" y="457.3" width="1.2" height="1" fill="#333"/><rect x="583.4" y="457.3" width="1.2" height="1" fill="#333"/><rect x="617.4" y="457.3" width="1.2" height="1" fill="#333"/><rect x="570.5" y="457.2" width="4.5" height="1.4" fill="#333"/><circle cx="544.5" cy="458" r="9.6" fill="none" stroke="#555" stroke-width="0.6" stroke-dasharray="2 1"/><circle cx="544.5" cy="458" r="7.9" fill="none" stroke="#333" stroke-width="0.8" stroke-dasharray="2.4 .8"/><circle cx="544.5" cy="458" r="6.1" fill="none" stroke="#222" stroke-width="0.8" stroke-dasharray="2 .8"/><circle cx="544.5" cy="458" r="4.3" fill="none" stroke="#222" stroke-width="0.9" stroke-dasharray="1.8 .7"/><circle cx="544.5" cy="458" r="2.5" fill="none" stroke="#222" stroke-width="0.8" stroke-dasharray="1.2 .6"/><path d="M538.5 449.3 H545.5" stroke="#777" stroke-width="1.2"/><path d="M550.5 448 Q554.5 452 552.5 458 Q554.5 464 550.5 468 M552.5 448 L555.5 452 M553.5 468 L555.5 464" stroke="#444" stroke-width=".6" fill="none"/><path d="M535.5 458 H555.5" stroke="#222" stroke-width="1.4" stroke-dasharray="2 .6"/><circle cx="597.5" cy="458" r="9.6" fill="none" stroke="#555" stroke-width="0.6" stroke-dasharray="2 1"/><circle cx="597.5" cy="458" r="7.9" fill="none" stroke="#333" stroke-width="0.8" stroke-dasharray="2.4 .8"/><circle cx="597.5" cy="458" r="6.1" fill="none" stroke="#222" stroke-width="0.8" stroke-dasharray="2 .8"/><circle cx="597.5" cy="458" r="4.3" fill="none" stroke="#222" stroke-width="0.9" stroke-dasharray="1.8 .7"/><circle cx="597.5" cy="458" r="2.5" fill="none" stroke="#222" stroke-width="0.8" stroke-dasharray="1.2 .6"/><path d="M591.5 449.3 H598.5" stroke="#777" stroke-width="1.2"/><path d="M603.5 448 Q607.5 452 605.5 458 Q607.5 464 603.5 468 M605.5 448 L608.5 452 M606.5 468 L608.5 464" stroke="#444" stroke-width=".6" fill="none"/><path d="M605.0 453 V463" stroke="#999" stroke-width="1.5"/><path d="M432.50,636.50 L499.50,636.50" stroke="#555" stroke-width="0.8" fill="none" /><path d="M432.50,635.50 L499.50,635.50" stroke="#888" stroke-width="0.5" fill="none" /><path d="M432.50,639.50 L501.00,639.50" stroke="#555" stroke-width="1.0" fill="none" /><path d="M432.50,635.50 L432.50,652.50" stroke="#222" stroke-width="0.7" fill="none" /><path d="M499.5 635.8 L506.4 652.5" stroke="#222" stroke-width="0.7" fill="none" /><path d="M432.30,645.50 L504.00,645.50" stroke="#3550ff" stroke-width="0.8" fill="none" stroke-dasharray="17 2.5 2 2.5"/><path d="M492.50,641.50 L492.50,650.50" stroke="#222" stroke-width="0.7" fill="none" /><path d="M492.40,650.50 L505.00,650.50" stroke="#222" stroke-width="0.6" fill="none" /><rect x="432.5" y="650.2" width="74" height="2.3" fill="#7a7a7a"/><path d="M503 640.2 L508.2 634.3 L515.3 641.4 L506.5 650.2" stroke="#444" stroke-width="0.6" fill="none" /><path d="M506.40,652.50 L544.60,652.50" stroke="#222" stroke-width="0.7" fill="none" /><path d="M516.00,643.00 L533.40,626.10" stroke="#444" stroke-width="0.6" fill="none" /><path d="M533.4 626.1 A26.5 26.5 0 0 1 544.6 652.5" stroke="#222" stroke-width="0.65" fill="none" /><path d="M532.0,627.5 L534.8,624.7" stroke="#111" stroke-width="0.9"/><path d="M543.2,653.9 L546.0,651.1" stroke="#111" stroke-width="0.9"/><text x="544.3" y="641" font-size="3" fill="#111" stroke="#111" stroke-width=".18" text-anchor="middle" font-family="Liberation Sans" transform="rotate(-80 544.3 641)" >45</text><text x="656" y="554.4" font-size="7.4" fill="#262626" font-family="Liberation Sans" textLength="313" lengthAdjust="spacingAndGlyphs">1.  Монтажные соединения выполнить ручной электродуговой сваркой электродами Э42</text><text x="656" y="566" font-size="8.8" fill="#303030" font-family="Liberation Sans" textLength="442" lengthAdjust="spacing">2.  Знак крепить на верхнюю переднюю шпалу с правой стороны по месту на 4 самореза 3.5х55</text><text x="656" y="577.2" font-size="7.2" fill="#262626" font-family="Liberation Sans" textLength="442" lengthAdjust="spacingAndGlyphs">3.  Пакет из тр?ш шпал закрепить проволкой черной (вязочной) ?8мм, проволку привариварить к головке рельса с внешней стороны</text><path d="M216.5 748 V701.5 L239.7 742 M216.5 714 L220.5 717.3 L223.8 713.8 M220.5 717.3 V720.8" stroke="#4564d4" stroke-width="0.75" fill="none" /><rect x="216.5" y="744.5" width="4.0" height="4.0" fill="none" stroke="#4564d4" stroke-width=".7"/><path d="M601.5 109 V762 M203 470.5 H1109" stroke="#7f7f7f" stroke-width="1"/><path d="M601.5 201.3 V748 M245 470.5 H1018" stroke="#999" stroke-width="1"/><circle cx="601.5" cy="470.5" r="1.5" fill="#fff" stroke="#999" stroke-width=".8"/></svg>
<div class="a" style="left:199px;top:742px;width:32px;height:19.5px;background:rgba(52,57,68,.78)"></div>
<div class="a" style="left:199.5px;top:742px;width:3.5px;height:19.5px;background:#2f343e;"></div>
<svg class="a" style="left:201px;top:748px;" width="1" height="9" viewBox="0 0 1 9"><path d="M0.5 0 V9" stroke="#8a909a" stroke-dasharray="1 1.2"/></svg>
<svg class="a" style="left:207.5px;top:749.5px;" width="6" height="6" viewBox="0 0 6 6"><path d="M0.5 0.5 L5.5 5.5 M5.5 0.5 L0.5 5.5" stroke="#e0e3e8" stroke-width="1.1"/></svg>
<svg class="a" style="left:218px;top:747.5px;" width="10" height="10" viewBox="0 0 10 10"><path d="M1.2 8.8 L5.2 4.8" stroke="#e0e3e8" stroke-width="1.7" stroke-linecap="round"/><path d="M4.6 5.4 Q3.8 2.6 5.8 1.2 Q7.4 0.3 8.6 1 L6.8 2.6 L7.4 3.6 L9.2 2.2 Q9.6 4.2 8.2 5.2 Q6.8 6 4.6 5.4Z" fill="#e0e3e8"/></svg>
<div class="a" style="left:231px;top:743px;width:878px;height:18.5px;background:rgba(252,252,252,.7)"></div>
<div class="a" style="left:231px;top:742px;width:878px;height:1px;background:rgba(94,94,94,.73);"></div>
<svg class="a" style="left:232.5px;top:748.5px;" width="10" height="8" viewBox="0 0 10 8"><rect x="0.5" y="0.5" width="9" height="7" fill="none" stroke="#9a9a9a"/><rect x="0.5" y="0.5" width="9" height="1.5" fill="#9a9a9a"/><path d="M2 5 H5" stroke="#aaa" stroke-width=".6"/></svg>
<svg class="a" style="left:244px;top:751.5px;" width="4" height="2.5" viewBox="0 0 4 2.5"><path d="M0 0 H4 L2 2.5Z" fill="#999"/></svg>
<div class="a" style="left:250.5px;top:746.5px;height:12px;line-height:12px;font-family:'Liberation Mono',monospace;font-style:italic;font-size:6.8px;color:#8a8a8a;transform-origin:0 50%;transform:scaleX(.98)">Введите команду</div>
<div class="a" style="left:0px;top:762px;width:1109px;height:15px;background:#222933;"></div>
<div class="a" style="left:0px;top:759.5px;width:187px;height:2.5px;background:#2f3643;"></div>
<div class="a" style="left:6px;top:763px;width:37px;height:9.5px;background:#2d3441;clip-path:polygon(0 0,100% 0,96% 100%,10% 100%);border-radius:3px"></div>
<div class="a" style="left:13.7px;top:762.00px;height:12px;line-height:12px;font-size:7.2px;color:#b4bac4;transform-origin:0 50%;transform:scaleX(0.875);">Модель</div>
<div class="a" style="left:43px;top:763px;width:32px;height:9.5px;background:#333b48;clip-path:polygon(0 0,100% 0,96% 100%,10% 100%);border-radius:3px"></div>
<div class="a" style="left:49.5px;top:762.00px;height:12px;line-height:12px;font-size:7.2px;color:#ffffff;font-weight:bold;transform-origin:0 50%;transform:scaleX(0.875);">Лист1</div>
<div class="a" style="left:75px;top:763px;width:31px;height:9.5px;background:#2d3441;clip-path:polygon(0 0,100% 0,96% 100%,10% 100%);border-radius:3px"></div>
<div class="a" style="left:81.5px;top:762.00px;height:12px;line-height:12px;font-size:7.2px;color:#b4bac4;transform-origin:0 50%;transform:scaleX(0.875);">Лист2</div>
<div class="a" style="left:106px;top:763px;width:14px;height:9.5px;background:#2d3441;clip-path:polygon(0 0,100% 0,90% 100%,10% 100%);border-radius:3px"></div>
<svg class="a" style="left:111.5px;top:765px;" width="6" height="6" viewBox="0 0 6 6"><path d="M3 0 V6 M0 3 H6" stroke="#c9cdd4" stroke-width=".9"/></svg>
<div class="a" style="left:0px;top:0px;width:1.5px;height:777px;background:rgba(30,34,41,.85);"></div>
<div class="a" style="left:0px;top:777px;width:1109px;height:23px;background:#1b1b1b;"></div>
<svg class="a" style="left:10px;top:785px;" width="10" height="9" viewBox="0 0 10 9"><path d="M0 1.3 L4.2 0.7 V4.2 H0Z M4.9 0.6 L10 0 V4.2 H4.9Z M0 4.9 H4.2 V8.4 L0 7.8Z M4.9 4.9 H10 V9 L4.9 8.4Z" fill="#fff"/></svg>
<svg class="a" style="left:37px;top:783.5px;" width="10" height="10" viewBox="0 0 10 10"><circle cx="6" cy="4" r="3.3" stroke="#ddd" stroke-width="1" fill="none"/><path d="M3.6 6.4 L0.5 9.5" stroke="#ddd" stroke-width="1.2"/></svg>
<div class="a" style="left:58px;top:777px;width:11.5px;height:23px;background:#a8161b;"></div>
<div class="a" style="left:69.5px;top:777px;width:11.5px;height:23px;background:#2f2f2f;"></div>
<div class="a" style="left:58px;top:798px;width:23px;height:2px;background:#e81123;"></div>
<svg class="a" style="left:63px;top:783px;" width="14" height="11" viewBox="0 0 14 11"><path d="M0 1 H5 L6 2.5 H13 V10 H0Z" fill="#e8b53c"/><rect x="0" y="4" width="14" height="6.5" fill="#f7d061"/><rect x="3" y="6" width="8" height="3" fill="#2a7fd4"/></svg>
<svg class="a" style="left:91px;top:783px;" width="12" height="12" viewBox="0 0 12 12"><circle cx="6" cy="6" r="6" fill="#2aa3dd"/><path d="M2.5 6 L9 3.3 L8 9 L6 7.4 L5 8.6 L5 7 L8 4.2 L4.3 6.7Z" fill="#fff"/></svg>
<svg class="a" style="left:119px;top:782.5px;" width="13" height="12" viewBox="0 0 13 12"><path d="M3 0 L12 2 L11 8 L2 6Z" fill="#5bb4ec"/><path d="M0 9 L9 11 L12 9 L3 7Z" fill="#ddd"/></svg>
<svg class="a" style="left:147px;top:783px;" width="12" height="11" viewBox="0 0 12 11"><rect x="0" y="0" width="12" height="11" rx="1" fill="#001e36"/><text x="1.5" y="8" font-size="7" font-family="Liberation Sans" font-weight="bold" fill="#31a8ff">Ps</text></svg>
<div class="a" style="left:171px;top:781.5px;width:18px;height:14px;background:#f2f2f2;"></div>
<svg class="a" style="left:174px;top:783px;" width="12" height="11" viewBox="0 0 12 11"><path d="M0 11 L4.5 0 H7.5 L12 11 H9.3 L6 3 L2.7 11Z" fill="#d0202a"/><rect x="3.5" y="6" width="5" height="1.6" fill="#d0202a"/></svg>
<div class="a" style="left:170px;top:798px;width:20px;height:2px;background:#c8c8c8;"></div>
<svg class="a" style="left:201.5px;top:782.5px;" width="13" height="13" viewBox="0 0 13 13"><circle cx="6.5" cy="6.5" r="6.5" fill="#fff"/><path d="M3.5 3 L6.5 7 L9.5 3 M6.5 7 V10.5" stroke="#f33" stroke-width="1.6" fill="none"/></svg>
<div class="a" style="left:197px;top:798px;width:23px;height:2px;background:#c8c8c8;"></div>
<svg class="a" style="left:229.5px;top:782.5px;" width="13" height="12" viewBox="0 0 13 12"><rect x="4" y="1" width="9" height="10" fill="#fff" opacity=".85"/><rect x="0" y="0" width="9" height="12" fill="#1d7044"/><path d="M2 3 L6 9 M6 3 L2 9" stroke="#fff" stroke-width="1.2"/><rect x="9.5" y="2" width="2.5" height="8" fill="#1d7044"/></svg>
<div class="a" style="left:225px;top:798px;width:23px;height:2px;background:#c8c8c8;"></div>
<svg class="a" style="left:257.5px;top:782.5px;" width="13" height="12" viewBox="0 0 13 12"><rect x="4" y="1" width="9" height="10" fill="#fff" opacity=".85"/><rect x="0" y="0" width="9" height="12" fill="#2b5aa8"/><path d="M1.5 3 L3 9 L4.5 5 L6 9 L7.5 3" stroke="#fff" stroke-width="1" fill="none"/><rect x="9.5" y="2" width="2.5" height="8" fill="#2b5aa8"/></svg>
<div class="a" style="left:285px;top:782.5px;width:13px;height:13px;background:#2d2d2d;"></div>
<div class="a" style="left:291.5px;top:783.00px;height:12px;line-height:12px;font-size:11px;color:#fff;font-weight:bold;font-style:italic;transform-origin:50% 50%;transform:translateX(-50%) scaleX(1);">H</div>
<div class="a" style="left:281px;top:798px;width:23px;height:2px;background:#c8c8c8;"></div>
<svg class="a" style="left:313.5px;top:783px;" width="13" height="11" viewBox="0 0 13 11"><rect x="0" y="0" width="13" height="11" fill="#e8e8e8"/><path d="M1 8 L5 3 L8 6 L12 2 V10 H1Z" fill="#e2542d"/><circle cx="4" cy="8" r="2" fill="#5a2"/></svg>
<div class="a" style="left:308px;top:798px;width:23px;height:2px;background:#c8c8c8;"></div>
<div class="a" style="left:334px;top:777px;width:27px;height:23px;background:#383838;"></div>
<svg class="a" style="left:340.5px;top:782.5px;" width="14" height="14" viewBox="0 0 14 14"><circle cx="6.5" cy="6.5" r="6.5" fill="#db4437"/><path d="M6.5 6.5 L0.9 3.2 A6.5 6.5 0 0 0 3.2 12.1Z" fill="#0f9d58"/><path d="M6.5 6.5 L3.2 12.1 A6.5 6.5 0 0 0 12.9 5Z" fill="#f4b400"/><circle cx="6.5" cy="6.5" r="2.8" fill="#fff"/><circle cx="6.5" cy="6.5" r="2.1" fill="#4285f4"/><circle cx="10" cy="10" r="3.5" fill="#1a73e8"/><text x="8.6" y="12" font-size="4" fill="#fff" font-family="Liberation Sans">E</text></svg>
<div class="a" style="left:334px;top:798px;width:27px;height:2px;background:#c8c8c8;"></div>
<div class="a" style="left:1105px;top:764px;width:4px;height:13px;background:#343c4a;"></div>
<svg class="a" style="left:1106px;top:768px;" width="3" height="6" viewBox="0 0 3 6"><path d="M0 6 L3 0 V6Z" fill="#9ab8e0"/></svg>
</body></html>
